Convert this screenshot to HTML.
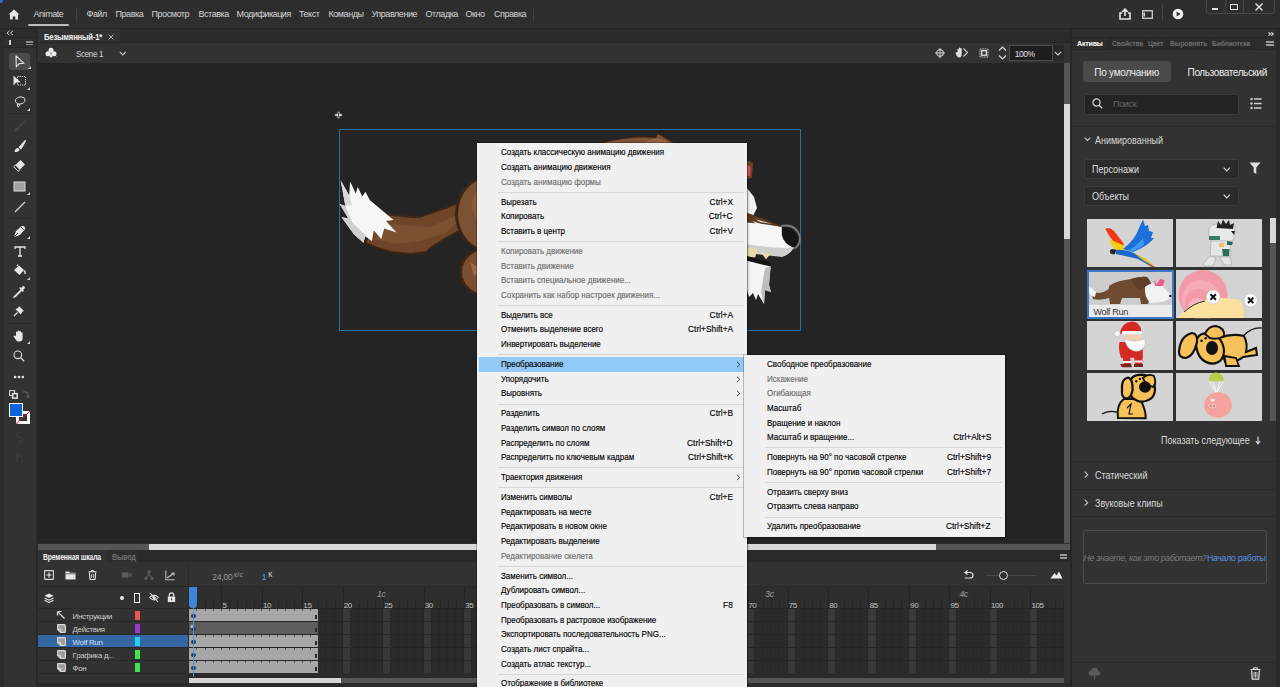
<!DOCTYPE html>
<html><head><meta charset="utf-8"><title>Animate</title>
<style>
*{margin:0;padding:0;box-sizing:border-box}
html,body{width:1280px;height:687px;overflow:hidden;background:#2e2e2e;font-family:"Liberation Sans",sans-serif;position:relative}
.a{position:absolute}
.t{position:absolute;white-space:nowrap;line-height:1}
svg{position:absolute;overflow:visible}

</style></head>
<body>
<div class="a" style="left:0px;top:0px;width:1280px;height:28px;background:#2e2e2e;"></div><div class="a" style="left:0px;top:28px;width:1280px;height:1px;background:#262626;"></div><div class="a" style="left:-3px;top:-3px;width:6px;height:6px;border-radius:3px;background:#3a6fd8"></div><svg style="left:8px;top:9px;" width="12" height="11" viewBox="0 0 12 11"><path d="M6 0.5 L11.5 5.5 L10 5.5 L10 10.5 L7.3 10.5 L7.3 7.5 L4.7 7.5 L4.7 10.5 L2 10.5 L2 5.5 L0.5 5.5 Z" fill="#e6e6e6"/></svg><div class="t" style="left:33.5px;top:9.88px;font-size:9px;color:#d4d4d4;letter-spacing:-0.45px;">Animate</div><div class="a" style="left:28px;top:24px;width:41px;height:2px;background:#bdbdbd;border-radius:1px"></div><div class="a" style="left:76px;top:8px;width:1px;height:14px;background:#404040;"></div><div class="t" style="left:86.5px;top:9.88px;font-size:9px;color:#d6d6d6;letter-spacing:-0.45px;">Файл</div><div class="t" style="left:115.5px;top:9.88px;font-size:9px;color:#d6d6d6;letter-spacing:-0.45px;">Правка</div><div class="t" style="left:151.5px;top:9.88px;font-size:9px;color:#d6d6d6;letter-spacing:-0.45px;">Просмотр</div><div class="t" style="left:198.5px;top:9.88px;font-size:9px;color:#d6d6d6;letter-spacing:-0.45px;">Вставка</div><div class="t" style="left:236.5px;top:9.88px;font-size:9px;color:#d6d6d6;letter-spacing:-0.45px;">Модификация</div><div class="t" style="left:299px;top:9.88px;font-size:9px;color:#d6d6d6;letter-spacing:-0.45px;">Текст</div><div class="t" style="left:328.5px;top:9.88px;font-size:9px;color:#d6d6d6;letter-spacing:-0.45px;">Команды</div><div class="t" style="left:371.5px;top:9.88px;font-size:9px;color:#d6d6d6;letter-spacing:-0.45px;">Управление</div><div class="t" style="left:425.5px;top:9.88px;font-size:9px;color:#d6d6d6;letter-spacing:-0.45px;">Отладка</div><div class="t" style="left:465.5px;top:9.88px;font-size:9px;color:#d6d6d6;letter-spacing:-0.45px;">Окно</div><div class="t" style="left:494px;top:9.88px;font-size:9px;color:#d6d6d6;letter-spacing:-0.45px;">Справка</div><div class="a" style="left:533px;top:8px;width:1px;height:14px;background:#404040;"></div><svg style="left:1119px;top:8px;" width="12" height="12" viewBox="0 0 12 12"><path d="M3 5 L1 5 L1 11 L11 11 L11 5 L9 5" fill="none" stroke="#e8e8e8" stroke-width="1.6"/><path d="M6 8 L6 1.5 M3.2 4 L6 1.2 L8.8 4" fill="none" stroke="#e8e8e8" stroke-width="1.6"/></svg><svg style="left:1142px;top:10px;" width="11" height="9" viewBox="0 0 11 9"><rect x="0.7" y="0.7" width="9.6" height="7.6" fill="none" stroke="#d0d0d0" stroke-width="1.3"/><rect x="1.5" y="2.5" width="1.5" height="4" fill="#d0d0d0"/></svg><div class="a" style="left:1162px;top:5px;width:1px;height:16px;background:#454545;"></div><svg style="left:1172px;top:8px;" width="12" height="12" viewBox="0 0 12 12"><circle cx="6" cy="6" r="5.3" fill="#f0f0f0"/><path d="M4.6 3.4 L8.6 6 L4.6 8.6 Z" fill="#2e2e2e"/></svg><div class="a" style="left:1206px;top:-2px;width:69px;height:15.5px;border:1px solid #4a4a4a;border-radius:0 0 3px 3px"></div><div class="a" style="left:1225px;top:0px;width:1px;height:13px;background:#444;"></div><div class="a" style="left:1243px;top:0px;width:1px;height:13px;background:#444;"></div><div class="a" style="left:1212px;top:8px;width:6px;height:2px;background:#e0e0e0;"></div><div class="a" style="left:1230px;top:4px;width:8px;height:6px;border:1.5px solid #e0e0e0"></div><svg style="left:1255px;top:3px;" width="8" height="8" viewBox="0 0 8 8"><path d="M0.5 0.5 L7.5 7.5 M7.5 0.5 L0.5 7.5" stroke="#e8e8e8" stroke-width="1.4"/></svg><div class="a" style="left:0px;top:29px;width:4px;height:658px;background:#2b2b2b;"></div><div class="a" style="left:4px;top:29px;width:32px;height:658px;background:#323232;"></div><div class="a" style="left:36px;top:29px;width:2px;height:658px;background:#282828;"></div><div class="a" style="left:4px;top:29px;width:32px;height:8px;background:#2c2c2c;"></div><div class="a" style="left:4px;top:38px;width:32px;height:9px;background:#2e2e2e;"></div><div class="a" style="left:4px;top:37px;width:32px;height:1px;background:#262626;"></div><svg style="left:6px;top:30px;" width="8" height="6" viewBox="0 0 8 6"><path d="M3.5 0.8 L1 3 L3.5 5.2 M7 0.8 L4.5 3 L7 5.2" fill="none" stroke="#d0d0d0" stroke-width="1"/></svg><div class="a" style="left:9px;top:40px;width:1.5px;height:5px;background:#cfcfcf;"></div><div class="a" style="left:26px;top:41px;width:7px;height:1.8px;background:#8a8a8a;"></div><div class="a" style="left:26px;top:43.6px;width:7px;height:1.8px;background:#8a8a8a;"></div><div class="a" style="left:4px;top:47px;width:32px;height:1px;background:#272727;"></div><div class="a" style="left:9px;top:53px;width:21px;height:17px;background:#4b4b4b;border-radius:3px"></div><svg style="left:15px;top:55px;" width="10" height="13" viewBox="0 0 10 13"><path d="M1 0.8 L1.3 12 L4.2 8.6 L9 8.3 Z" fill="none" stroke="#e6e6e6" stroke-width="1.1" stroke-linejoin="round"/></svg><svg style="left:28px;top:66px;" width="3" height="3" viewBox="0 0 3 3"><path d="M3 0 L3 3 L0 3 Z" fill="#d0d0d0"/></svg><svg style="left:13px;top:75px;" width="14" height="12" viewBox="0 0 14 12"><rect x="4.5" y="1.5" width="8" height="8.5" fill="none" stroke="#e0e0e0" stroke-width="1" stroke-dasharray="1.2 0.9"/><path d="M0.5 0.5 L0.5 10.5 L3.2 7.6 L7.5 7.2 Z" fill="#e6e6e6"/></svg><svg style="left:27px;top:87px;" width="3" height="3" viewBox="0 0 3 3"><path d="M3 0 L3 3 L0 3 Z" fill="#d0d0d0"/></svg><svg style="left:14px;top:96px;" width="12" height="13" viewBox="0 0 12 13"><path d="M4 8 Q0.5 6.5 1.5 3.5 Q3 0.8 7 0.8 Q11 1 11 4 Q11 7.5 5.5 8 Q3.5 8 3.5 9.5 Q3.5 11 5 11" fill="none" stroke="#dcdcdc" stroke-width="1"/><circle cx="4.5" cy="9" r="1.3" fill="none" stroke="#dcdcdc" stroke-width="0.9"/></svg><svg style="left:27px;top:108px;" width="3" height="3" viewBox="0 0 3 3"><path d="M3 0 L3 3 L0 3 Z" fill="#d0d0d0"/></svg><div class="a" style="left:8px;top:113px;width:24px;height:1px;background:#2a2a2a;"></div><svg style="left:14px;top:120px;" width="12" height="12" viewBox="0 0 12 12"><path d="M11 1 L5 7 M1 11 Q1 8 4 8 L5 9 Q4 11 1 11 Z" fill="#454545" stroke="#454545" stroke-width="1.5"/></svg><svg style="left:14px;top:140px;" width="12" height="13" viewBox="0 0 12 13"><path d="M11.3 0.8 L5.5 7.2 L7 8.6 Z" fill="#e6e6e6" stroke="#e6e6e6" stroke-width="1.4" stroke-linejoin="round"/><path d="M0.5 12 Q1 8.2 4.3 8 L5.6 9.4 Q5 12 0.5 12 Z" fill="#e6e6e6"/></svg><svg style="left:13px;top:159px;" width="13" height="13" viewBox="0 0 13 13"><path d="M7.5 1 L12 5.5 L7 10.5 L2.5 6 Z" fill="#e6e6e6"/><path d="M2.5 6 L7 10.5 L5.2 12.3 L0.7 7.8 Z" fill="none" stroke="#e6e6e6" stroke-width="1"/></svg><svg style="left:13px;top:181px;" width="13" height="11" viewBox="0 0 13 11"><rect x="1" y="1" width="11" height="9" fill="#a2a2a2" stroke="#dcdcdc" stroke-width="1"/></svg><svg style="left:27px;top:192px;" width="3" height="3" viewBox="0 0 3 3"><path d="M3 0 L3 3 L0 3 Z" fill="#d0d0d0"/></svg><svg style="left:14px;top:201px;" width="12" height="12" viewBox="0 0 12 12"><path d="M1 11 L11 1" stroke="#e0e0e0" stroke-width="1.1"/></svg><div class="a" style="left:8px;top:218px;width:24px;height:1px;background:#2a2a2a;"></div><svg style="left:13px;top:225px;" width="13" height="13" viewBox="0 0 13 13"><path d="M11.5 1.5 L9 0.8 L3 6 L1 12 L7 10 L12.2 4 Z" fill="#e6e6e6"/><path d="M1.2 11.8 L5 8" stroke="#323232" stroke-width="0.9"/><path d="M8 2 L11 5" stroke="#323232" stroke-width="0.8"/></svg><svg style="left:27px;top:236px;" width="3" height="3" viewBox="0 0 3 3"><path d="M3 0 L3 3 L0 3 Z" fill="#d0d0d0"/></svg><svg style="left:14px;top:246px;" width="12" height="11" viewBox="0 0 12 11"><path d="M1 3 L1 1 L11 1 L11 3 M6 1 L6 10 M4 10 L8 10" fill="none" stroke="#e6e6e6" stroke-width="1.3"/></svg><svg style="left:13px;top:264px;" width="14" height="13" viewBox="0 0 14 13"><path d="M1 6 L6 1.5 L11 6 L6.5 11 Z" fill="#e6e6e6"/><path d="M4 2 L5 0.5" stroke="#e6e6e6" stroke-width="1.2"/><path d="M11.2 6.5 Q12.5 8 12 10" stroke="#e6e6e6" stroke-width="1.5" fill="none"/></svg><svg style="left:27px;top:277px;" width="3" height="3" viewBox="0 0 3 3"><path d="M3 0 L3 3 L0 3 Z" fill="#d0d0d0"/></svg><svg style="left:13px;top:285px;" width="13" height="13" viewBox="0 0 13 13"><path d="M10 1 Q12 1 12 3 L9.5 5.5 L7.5 3.5 Z" fill="#e6e6e6"/><path d="M8.5 4.5 L2 11 L1 12 L2 12 L8.8 5.2" fill="none" stroke="#e6e6e6" stroke-width="1.2"/><path d="M6.5 2.5 L10.5 6.5" stroke="#e6e6e6" stroke-width="1.2"/></svg><svg style="left:13px;top:305px;" width="12" height="12" viewBox="0 0 12 12"><path d="M6 1 L11 6 L9.5 6.5 L7.8 9.5 L2.5 4.2 L5.5 2.5 Z" fill="#e6e6e6"/><path d="M4.5 7.5 L1 11" stroke="#e6e6e6" stroke-width="1.2"/></svg><div class="a" style="left:8px;top:323px;width:24px;height:1px;background:#2a2a2a;"></div><svg style="left:13px;top:330px;" width="13" height="13" viewBox="0 0 13 13"><path d="M3 6 L3 2.5 Q3 1.6 3.8 1.6 Q4.6 1.6 4.6 2.5 L4.6 5.5 L4.6 1.5 Q4.6 0.6 5.5 0.6 Q6.4 0.6 6.4 1.5 L6.4 5.5 L6.4 1.8 Q6.4 1 7.2 1 Q8 1 8 1.8 L8 5.8 L8 3 Q8 2.2 8.8 2.2 Q9.6 2.2 9.6 3 L9.6 8 Q9.6 11.5 6.5 11.5 L5.5 11.5 Q4 11.5 3 10 L0.8 6.8 Q0.4 6 1.2 5.6 Q2 5.3 3 6.3 Z" fill="#e6e6e6"/></svg><svg style="left:27px;top:341px;" width="3" height="3" viewBox="0 0 3 3"><path d="M3 0 L3 3 L0 3 Z" fill="#d0d0d0"/></svg><svg style="left:13px;top:350px;" width="12" height="12" viewBox="0 0 12 12"><circle cx="4.8" cy="4.8" r="3.8" fill="none" stroke="#e0e0e0" stroke-width="1.1"/><path d="M7.6 7.6 L11.2 11.2" stroke="#e0e0e0" stroke-width="1.3"/></svg><svg style="left:13px;top:375px;" width="12" height="4" viewBox="0 0 12 4"><circle cx="2.2" cy="2" r="1.3" fill="#e6e6e6"/><circle cx="6" cy="2" r="1.3" fill="#e6e6e6"/><circle cx="9.8" cy="2" r="1.3" fill="#e6e6e6"/></svg><svg style="left:9px;top:390px;" width="9" height="9" viewBox="0 0 9 9"><rect x="0.6" y="0.6" width="5" height="5" fill="#323232" stroke="#e0e0e0" stroke-width="1"/><rect x="3.4" y="3.4" width="5" height="5" fill="#e0e0e0" stroke="#e0e0e0" stroke-width="1"/><rect x="4.4" y="4.4" width="3" height="3" fill="#323232"/></svg><svg style="left:22px;top:391px;" width="7" height="8" viewBox="0 0 7 8"><path d="M1 1 L4 1 Q6 1 6 3 L6 7 M4.5 5.5 L6 7 L7.5 5.5" fill="none" stroke="#666" stroke-width="1"/></svg><svg style="left:15px;top:410px;" width="16" height="15" viewBox="0 0 16 15"><rect x="1" y="1" width="14" height="13" fill="#fff"/><rect x="4" y="4" width="8" height="7" fill="#323232"/><path d="M1 14 L15 1" stroke="#e02020" stroke-width="1"/></svg><div class="a" style="left:9px;top:403px;width:14px;height:13.5px;background:#0e63d6;border:1px solid #fff"></div><svg style="left:15px;top:431px;" width="9" height="12" viewBox="0 0 9 12"><path d="M7 1 Q2 1 2 4 Q2 6 5 6.5 Q8 7 7.5 9.5 Q7 11 3 11" fill="none" stroke="#3e3e3e" stroke-width="1.2"/></svg><svg style="left:15px;top:451px;" width="9" height="12" viewBox="0 0 9 12"><path d="M2 1 L2 11 M2 6 Q4 4 6 5 Q7 6 7 11" fill="none" stroke="#3e3e3e" stroke-width="1.2"/></svg><div class="a" style="left:38px;top:29px;width:1032px;height:13px;background:#2b2b2b;"></div><div class="a" style="left:38px;top:29px;width:82px;height:13px;background:#323232;"></div><div class="a" style="left:120px;top:29px;width:1px;height:13px;background:#292929;"></div><div class="t" style="left:43.7px;top:32.80px;font-size:8.5px;color:#f0f0f0;letter-spacing:-0.2px;font-weight:bold;transform:scaleX(0.9);transform-origin:left center;">Безымянный-1*</div><svg style="left:108px;top:34px;" width="6" height="6" viewBox="0 0 6 6"><path d="M0.6 0.6 L5.4 5.4 M5.4 0.6 L0.6 5.4" stroke="#bdbdbd" stroke-width="0.9"/></svg><div class="a" style="left:38px;top:42px;width:1032px;height:1px;background:#262626;"></div><div class="a" style="left:38px;top:43px;width:1032px;height:20px;background:#323232;"></div><svg style="left:45px;top:47px;" width="12" height="12" viewBox="0 0 12 12"><circle cx="6" cy="3.2" r="2.5" fill="#ececec"/><circle cx="3" cy="6.8" r="2.5" fill="#ececec"/><circle cx="9" cy="6.8" r="2.5" fill="#ececec"/><path d="M6 5 L4.5 10.3 L7.5 10.3 Z" fill="#ececec"/><path d="M10.5 10 L11.5 10 L11.5 9 Z" fill="#aaa"/></svg><div class="t" style="left:75.5px;top:49.88px;font-size:9px;color:#d8d8d8;letter-spacing:-0.3px;transform:scaleX(0.88);transform-origin:left center;">Scene 1</div><svg style="left:119px;top:51px;" width="8" height="5" viewBox="0 0 8 5"><path d="M0.8 0.8 L3.8 3.8 L6.8 0.8" fill="none" stroke="#d0d0d0" stroke-width="1.2"/></svg><svg style="left:935px;top:48px;" width="10" height="10" viewBox="0 0 10 10"><circle cx="5" cy="5" r="3.2" fill="none" stroke="#d6d6d6" stroke-width="1.1"/><path d="M5 0 L5 10 M0 5 L10 5" stroke="#d6d6d6" stroke-width="1"/></svg><svg style="left:955px;top:47px;" width="14" height="12" viewBox="0 0 14 12"><path d="M2.5 5 L2.5 2.5 Q2.5 1.8 3.2 1.8 Q3.9 1.8 3.9 2.5 L3.9 4.5 L3.9 1.3 Q3.9 0.6 4.6 0.6 Q5.3 0.6 5.3 1.3 L5.3 4.5 L5.3 1.8 Q5.3 1.1 6 1.1 Q6.7 1.1 6.7 1.8 L6.7 6.5 Q6.7 10.5 4.5 10.5 Q2.5 10.5 1.5 8.5 L0.5 6 Q0.5 5 1.5 5.2 Z" fill="#e0e0e0"/><path d="M8.5 1.5 L12.5 5.5 L8.5 9.5" fill="none" stroke="#cfcfcf" stroke-width="1.1"/></svg><svg style="left:979px;top:48px;" width="10" height="10" viewBox="0 0 10 10"><rect x="1" y="1" width="8" height="8" fill="none" stroke="#cfcfcf" stroke-width="1" stroke-dasharray="1 0.6"/><rect x="2.7" y="2.7" width="4.6" height="4.6" fill="none" stroke="#dcdcdc" stroke-width="1.3"/></svg><svg style="left:998px;top:46px;" width="9" height="14" viewBox="0 0 9 14"><path d="M1 4.5 L4.5 1 L8 4.5 M1 9.5 L4.5 13 L8 9.5" fill="none" stroke="#d8d8d8" stroke-width="1.2"/></svg><div class="a" style="left:1052px;top:45px;width:12px;height:16px;background:#282828;border-radius:0 2px 2px 0"></div><div class="a" style="left:1008.5px;top:45px;width:44px;height:16px;background:#1e1e1e;border:1px solid #4e4e4e"></div><div class="t" style="left:1014.8px;top:50.30px;font-size:8.5px;color:#e0e0e0;letter-spacing:-0.5px;">100%</div><svg style="left:1054px;top:51px;" width="8" height="5" viewBox="0 0 8 5"><path d="M0.8 0.8 L4 4 L7.2 0.8" fill="none" stroke="#d0d0d0" stroke-width="1.2"/></svg><div class="a" style="left:38px;top:63px;width:1026px;height:480px;background:#242424;"></div><div class="a" style="left:1064px;top:63px;width:6px;height:480px;background:#555555;"></div><div class="a" style="left:1064px;top:104px;width:6px;height:135px;background:#d8d8d8;"></div><div class="a" style="left:38px;top:543.5px;width:1032px;height:6.5px;background:#555555;"></div><div class="a" style="left:149px;top:543.5px;width:787px;height:6.5px;background:#d8d8d8;"></div><svg style="left:334px;top:111px;" width="9" height="8" viewBox="0 0 9 8"><path d="M3.2 0.5 L5.8 0.5 L5.8 2.8 L8.3 2.8 L8.3 5.2 L5.8 5.2 L5.8 7.5 L3.2 7.5 L3.2 5.2 L0.7 5.2 L0.7 2.8 L3.2 2.8 Z" fill="#f0f0f0" stroke="#111" stroke-width="0.6"/><path d="M4.5 1.5 L4.5 6.5" stroke="#111" stroke-width="0.8"/></svg><div class="a" style="left:338.5px;top:128.5px;width:462px;height:202.5px;border:1.5px solid #2a6f9e"></div><svg style="left:0;top:0" width="1280" height="687" viewBox="0 0 1280 687">
<path d="M386 213.5 L414.5 216.3 L421 215.4 L429.6 212.6 L448.5 206 L460 201 L470 200 L466 236 L458 232.4 L441 242 L429.6 249.5 L427.7 253.2 L410.7 255.1 L391.8 253.2 L376.6 248.5 L365.3 243.8 Z" fill="#3d2616"/>
<path d="M387 215.5 L414.5 218.3 L421 217.4 L429.6 214.6 L448.5 208 L460 203 L466 233 L458 230.4 L441 240 L429.6 247.5 L426 251 L410.7 253 L391.8 251.2 L376.6 246.5 L366 242 Z" fill="#6e4529"/>
<path d="M392 224 L430 227 L455 216 L462 219 L445 233 L420 241 L395 244 L374 239 Z" fill="#7b5132"/>
<path d="M340.7 180.4 L349.2 195.5 L350.1 181.4 L355.8 193.6 L357.7 187 L362.4 196.5 L365.3 191.8 L370 200.3 L381.3 209.7 L393.6 220 L386 221 L396.5 232.4 L384.2 228.6 L381.3 239 L373.8 230.5 L371.9 241 L365.3 236.2 L363.4 242.8 L353.9 234.3 L341.6 217.3 L348.2 218.2 L339.7 204 L345.4 206 Z" fill="#f6f6f6"/>
<path d="M339.7 204 L345.4 206 L352 222 L362 232 L371.9 241 L365.3 236.2 L363.4 242.8 L353.9 234.3 L341.6 217.3 L348.2 218.2 Z" fill="#cfcfcf"/>
<path d="M340.7 180.4 L349.2 195.5 L352 205 L345.4 206 L339.7 204 L345.4 206 Z" fill="#d8d8d8"/>
<ellipse cx="488" cy="214" rx="33" ry="38" fill="#3d2616"/>
<ellipse cx="489" cy="214" rx="31" ry="36" fill="#7d5233"/>
<ellipse cx="494" cy="205" rx="22" ry="22" fill="#8c5d3a"/>
<ellipse cx="490" cy="272" rx="31" ry="26" fill="#3d2616"/>
<ellipse cx="491" cy="272" rx="29" ry="24" fill="#7a4f31"/>
<path d="M470 262 L482 270 L474 276 Z" fill="#9a6a45"/>
<path d="M601 143 Q628 134 656 136.5 L657 132 L676 143 Z" fill="#3a2414"/><path d="M603 143 Q630 135.5 656 138 L658 134 L673 143 Z" fill="#7c5134"/>
<path d="M645 143 Q652 138 659 138 L670 143 Z" fill="#946240"/>
<path d="M747 160 L753 163 L752 178 L747 179 Z" fill="#6e4428"/>
<path d="M747 165 L750.5 167 L750 176 L747 176 Z" fill="#e0506e"/>
<path d="M747 188 L754 197 L757 208 L753 216 L747 216 Z" fill="#f2f2f2"/>
<path d="M747 212.8 L765 219 L783.4 227.2 L770 226 L747 223 Z" fill="#5a3820"/>
<path d="M755 219 L772 224 L760 222 Z M752 221 L765 225 L756 224 Z" fill="#e8e8e8"/>
<path d="M747 222.4 L770 225 L782.6 227.2 Q790 236 794 247 Q790 255 782 256 L747 251 Z" fill="#f6f6f6"/>
<path d="M747 244 Q770 248 786 248 L793 247 Q790 255 782 257 L747 253 Z" fill="#cfcfcf"/>
<path d="M781.8 227 Q793 226 798 237 Q798 246 793 247.5 Q784 244 781.8 235 Z" fill="#151515"/>
<path d="M781 226 Q796 223 800 237 Q800 247 793 249" fill="none" stroke="#7a7a7a" stroke-width="1.8"/>
<path d="M747 248 L757.8 249 L755 257.6 L747 257 Z" fill="#eadca8"/>
<path d="M761 252.8 L770.6 254 L766 259.2 Z" fill="#eadca8"/>
<path d="M747 256 L770.6 262 L770.6 267.2 L747 261 Z" fill="#141414"/>
<path d="M747 260.8 L770.6 266.5 L769 285 L771 292 L765 290 L764 304 L758 294 L756 300 L753 293 L749 297 L747 290 Z" fill="#f4f4f4"/>
<path d="M765 268 L770.6 266.5 L769 285 L771 292 L765 290 L764 304 L761 292 Z" fill="#bdbdbd"/>
</svg><div class="a" style="left:38px;top:550px;width:1032px;height:137px;background:#323232;"></div><div class="a" style="left:38px;top:550px;width:1032px;height:12px;background:#2a2a2a;"></div><div class="a" style="left:38px;top:550px;width:69px;height:12px;background:#323232;"></div><div class="a" style="left:107px;top:550px;width:32px;height:12px;background:#2d2d2d;"></div><div class="a" style="left:139px;top:550px;width:1px;height:12px;background:#262626;"></div><div class="t" style="left:42.7px;top:552.80px;font-size:8.5px;color:#f2f2f2;letter-spacing:-0.2px;font-weight:bold;transform:scaleX(0.8);transform-origin:left center;">Временная шкала</div><div class="t" style="left:112px;top:552.80px;font-size:8.5px;color:#6e6e6e;letter-spacing:-0.2px;font-weight:bold;transform:scaleX(0.85);transform-origin:left center;">Вывод</div><div class="a" style="left:1059.5px;top:554px;width:7px;height:2px;background:#9a9a9a;"></div><div class="a" style="left:1059.5px;top:557px;width:7px;height:2px;background:#9a9a9a;"></div><svg style="left:44px;top:570px;" width="10" height="10" viewBox="0 0 10 10"><rect x="0.6" y="0.6" width="8.8" height="8.8" fill="none" stroke="#d8d8d8" stroke-width="1.1" rx="0.5"/><path d="M5 2.5 L5 7.5 M2.5 5 L7.5 5" stroke="#e8e8e8" stroke-width="1.2"/></svg><svg style="left:65px;top:571px;" width="11" height="9" viewBox="0 0 11 9"><path d="M0.5 0.5 L4 0.5 L5 1.8 L10.5 1.8 L10.5 8.5 L0.5 8.5 Z" fill="#e6e6e6"/><path d="M0.5 2.8 L10.5 2.8" stroke="#323232" stroke-width="0.7"/></svg><svg style="left:88px;top:570px;" width="9" height="10" viewBox="0 0 9 10"><path d="M0.5 1.8 L8.5 1.8 M3 1.8 L3.5 0.5 L5.5 0.5 L6 1.8" fill="none" stroke="#e6e6e6" stroke-width="1"/><path d="M1.3 2.5 L2 9.5 L7 9.5 L7.7 2.5" fill="none" stroke="#e6e6e6" stroke-width="1.1"/><path d="M3.5 4 L3.5 8 M5.5 4 L5.5 8" stroke="#e6e6e6" stroke-width="0.8"/></svg><svg style="left:122px;top:572px;" width="10" height="6" viewBox="0 0 10 6"><rect x="0" y="0.5" width="6.5" height="5" fill="#5e5e5e"/><path d="M6.5 3 L9.5 0.8 L9.5 5.2 Z" fill="#5e5e5e"/></svg><svg style="left:144px;top:570px;" width="10" height="11" viewBox="0 0 10 11"><path d="M5 1 L5 4 M2 8 L5 4 L8 8" fill="none" stroke="#5e5e5e" stroke-width="1.2"/><circle cx="5" cy="1.8" r="1.6" fill="#5e5e5e"/><circle cx="2" cy="8.3" r="1.6" fill="#5e5e5e"/><circle cx="8" cy="8.3" r="1.6" fill="#5e5e5e"/></svg><svg style="left:165px;top:570px;" width="10" height="11" viewBox="0 0 10 11"><path d="M0.8 0.5 L0.8 9.8 L9.5 9.8" fill="none" stroke="#b8b8b8" stroke-width="1.1"/><path d="M2 8 L8.5 3.5 M6.5 3 L9 3 L9 5.5" fill="none" stroke="#c8c8c8" stroke-width="1.1"/></svg><div class="a" style="left:188px;top:563px;width:1px;height:124px;background:#2a2a2a;"></div><div class="t" style="left:212.3px;top:572.80px;font-size:8.5px;color:#9a9a9a;letter-spacing:-0.2px;">24,00</div><div class="t" style="left:234px;top:570.57px;font-size:7px;color:#9a9a9a;letter-spacing:0.3px;">к/с</div><div class="t" style="left:261.8px;top:573.30px;font-size:8.5px;color:#5aa2ea;">1</div><div class="t" style="left:268.3px;top:571.07px;font-size:7px;color:#e0e0e0;">К</div><svg style="left:964px;top:570px;" width="10" height="9" viewBox="0 0 10 9"><path d="M2 2.5 L6 2.5 Q9 2.5 9 5.5 Q9 8 6 8 L0.8 8" fill="none" stroke="#e0e0e0" stroke-width="1.2"/><path d="M3.5 0.5 L1 2.5 L3.5 4.5" fill="none" stroke="#e0e0e0" stroke-width="1.2"/></svg><div class="a" style="left:986px;top:575px;width:50px;height:1px;background:#484848;"></div><div class="a" style="left:998.5px;top:570.5px;width:9px;height:9px;border:1.5px solid #e0e0e0;border-radius:5px;background:#323232"></div><svg style="left:1050px;top:570px;" width="13" height="9" viewBox="0 0 13 9"><path d="M0.5 8.5 L4.5 3 L6.5 5.5 L9 1.5 L12.5 8.5 Z" fill="#ececec"/></svg><div class="a" style="left:189px;top:586px;width:881px;height:1px;background:#282828;"></div><div class="a" style="left:189px;top:587px;width:875px;height:22px;background:#2e2e2e;"></div><div class="a" style="left:189px;top:597px;width:875px;height:1px;background:#2e2e2e;"></div><div class="a" style="left:38px;top:586px;width:150px;height:1px;background:#282828;"></div><div class="a" style="left:188.90px;top:598px;width:1px;height:11px;background:#262626"></div><div class="a" style="left:196.99px;top:598px;width:1px;height:11px;background:#262626"></div><div class="a" style="left:205.08px;top:598px;width:1px;height:11px;background:#262626"></div><div class="a" style="left:213.17px;top:598px;width:1px;height:11px;background:#262626"></div><div class="a" style="left:221.26px;top:587px;width:1px;height:22px;background:#242424"></div><div class="a" style="left:229.35px;top:598px;width:1px;height:11px;background:#262626"></div><div class="a" style="left:237.44px;top:598px;width:1px;height:11px;background:#262626"></div><div class="a" style="left:245.53px;top:598px;width:1px;height:11px;background:#262626"></div><div class="a" style="left:253.62px;top:598px;width:1px;height:11px;background:#262626"></div><div class="a" style="left:261.71px;top:587px;width:1px;height:22px;background:#242424"></div><div class="a" style="left:269.80px;top:598px;width:1px;height:11px;background:#262626"></div><div class="a" style="left:277.89px;top:598px;width:1px;height:11px;background:#262626"></div><div class="a" style="left:285.98px;top:598px;width:1px;height:11px;background:#262626"></div><div class="a" style="left:294.07px;top:598px;width:1px;height:11px;background:#262626"></div><div class="a" style="left:302.16px;top:587px;width:1px;height:22px;background:#242424"></div><div class="a" style="left:310.25px;top:598px;width:1px;height:11px;background:#262626"></div><div class="a" style="left:318.34px;top:598px;width:1px;height:11px;background:#262626"></div><div class="a" style="left:326.43px;top:598px;width:1px;height:11px;background:#262626"></div><div class="a" style="left:334.52px;top:598px;width:1px;height:11px;background:#262626"></div><div class="a" style="left:342.61px;top:587px;width:1px;height:22px;background:#242424"></div><div class="a" style="left:350.70px;top:598px;width:1px;height:11px;background:#262626"></div><div class="a" style="left:358.79px;top:598px;width:1px;height:11px;background:#262626"></div><div class="a" style="left:366.88px;top:598px;width:1px;height:11px;background:#262626"></div><div class="a" style="left:374.97px;top:598px;width:1px;height:11px;background:#262626"></div><div class="a" style="left:383.06px;top:587px;width:1px;height:22px;background:#242424"></div><div class="a" style="left:391.15px;top:598px;width:1px;height:11px;background:#262626"></div><div class="a" style="left:399.24px;top:598px;width:1px;height:11px;background:#262626"></div><div class="a" style="left:407.33px;top:598px;width:1px;height:11px;background:#262626"></div><div class="a" style="left:415.42px;top:598px;width:1px;height:11px;background:#262626"></div><div class="a" style="left:423.51px;top:587px;width:1px;height:22px;background:#242424"></div><div class="a" style="left:431.60px;top:598px;width:1px;height:11px;background:#262626"></div><div class="a" style="left:439.69px;top:598px;width:1px;height:11px;background:#262626"></div><div class="a" style="left:447.78px;top:598px;width:1px;height:11px;background:#262626"></div><div class="a" style="left:455.87px;top:598px;width:1px;height:11px;background:#262626"></div><div class="a" style="left:463.96px;top:587px;width:1px;height:22px;background:#242424"></div><div class="a" style="left:472.05px;top:598px;width:1px;height:11px;background:#262626"></div><div class="a" style="left:480.14px;top:598px;width:1px;height:11px;background:#262626"></div><div class="a" style="left:488.23px;top:598px;width:1px;height:11px;background:#262626"></div><div class="a" style="left:496.32px;top:598px;width:1px;height:11px;background:#262626"></div><div class="a" style="left:504.41px;top:587px;width:1px;height:22px;background:#242424"></div><div class="a" style="left:512.50px;top:598px;width:1px;height:11px;background:#262626"></div><div class="a" style="left:520.59px;top:598px;width:1px;height:11px;background:#262626"></div><div class="a" style="left:528.68px;top:598px;width:1px;height:11px;background:#262626"></div><div class="a" style="left:536.77px;top:598px;width:1px;height:11px;background:#262626"></div><div class="a" style="left:544.86px;top:587px;width:1px;height:22px;background:#242424"></div><div class="a" style="left:552.95px;top:598px;width:1px;height:11px;background:#262626"></div><div class="a" style="left:561.04px;top:598px;width:1px;height:11px;background:#262626"></div><div class="a" style="left:569.13px;top:598px;width:1px;height:11px;background:#262626"></div><div class="a" style="left:577.22px;top:598px;width:1px;height:11px;background:#262626"></div><div class="a" style="left:585.31px;top:587px;width:1px;height:22px;background:#242424"></div><div class="a" style="left:593.40px;top:598px;width:1px;height:11px;background:#262626"></div><div class="a" style="left:601.49px;top:598px;width:1px;height:11px;background:#262626"></div><div class="a" style="left:609.58px;top:598px;width:1px;height:11px;background:#262626"></div><div class="a" style="left:617.67px;top:598px;width:1px;height:11px;background:#262626"></div><div class="a" style="left:625.76px;top:587px;width:1px;height:22px;background:#242424"></div><div class="a" style="left:633.85px;top:598px;width:1px;height:11px;background:#262626"></div><div class="a" style="left:641.94px;top:598px;width:1px;height:11px;background:#262626"></div><div class="a" style="left:650.03px;top:598px;width:1px;height:11px;background:#262626"></div><div class="a" style="left:658.12px;top:598px;width:1px;height:11px;background:#262626"></div><div class="a" style="left:666.21px;top:587px;width:1px;height:22px;background:#242424"></div><div class="a" style="left:674.30px;top:598px;width:1px;height:11px;background:#262626"></div><div class="a" style="left:682.39px;top:598px;width:1px;height:11px;background:#262626"></div><div class="a" style="left:690.48px;top:598px;width:1px;height:11px;background:#262626"></div><div class="a" style="left:698.57px;top:598px;width:1px;height:11px;background:#262626"></div><div class="a" style="left:706.66px;top:587px;width:1px;height:22px;background:#242424"></div><div class="a" style="left:714.75px;top:598px;width:1px;height:11px;background:#262626"></div><div class="a" style="left:722.84px;top:598px;width:1px;height:11px;background:#262626"></div><div class="a" style="left:730.93px;top:598px;width:1px;height:11px;background:#262626"></div><div class="a" style="left:739.02px;top:598px;width:1px;height:11px;background:#262626"></div><div class="a" style="left:747.11px;top:587px;width:1px;height:22px;background:#242424"></div><div class="a" style="left:755.20px;top:598px;width:1px;height:11px;background:#262626"></div><div class="a" style="left:763.29px;top:598px;width:1px;height:11px;background:#262626"></div><div class="a" style="left:771.38px;top:598px;width:1px;height:11px;background:#262626"></div><div class="a" style="left:779.47px;top:598px;width:1px;height:11px;background:#262626"></div><div class="a" style="left:787.56px;top:587px;width:1px;height:22px;background:#242424"></div><div class="a" style="left:795.65px;top:598px;width:1px;height:11px;background:#262626"></div><div class="a" style="left:803.74px;top:598px;width:1px;height:11px;background:#262626"></div><div class="a" style="left:811.83px;top:598px;width:1px;height:11px;background:#262626"></div><div class="a" style="left:819.92px;top:598px;width:1px;height:11px;background:#262626"></div><div class="a" style="left:828.01px;top:587px;width:1px;height:22px;background:#242424"></div><div class="a" style="left:836.10px;top:598px;width:1px;height:11px;background:#262626"></div><div class="a" style="left:844.19px;top:598px;width:1px;height:11px;background:#262626"></div><div class="a" style="left:852.28px;top:598px;width:1px;height:11px;background:#262626"></div><div class="a" style="left:860.37px;top:598px;width:1px;height:11px;background:#262626"></div><div class="a" style="left:868.46px;top:587px;width:1px;height:22px;background:#242424"></div><div class="a" style="left:876.55px;top:598px;width:1px;height:11px;background:#262626"></div><div class="a" style="left:884.64px;top:598px;width:1px;height:11px;background:#262626"></div><div class="a" style="left:892.73px;top:598px;width:1px;height:11px;background:#262626"></div><div class="a" style="left:900.82px;top:598px;width:1px;height:11px;background:#262626"></div><div class="a" style="left:908.91px;top:587px;width:1px;height:22px;background:#242424"></div><div class="a" style="left:917.00px;top:598px;width:1px;height:11px;background:#262626"></div><div class="a" style="left:925.09px;top:598px;width:1px;height:11px;background:#262626"></div><div class="a" style="left:933.18px;top:598px;width:1px;height:11px;background:#262626"></div><div class="a" style="left:941.27px;top:598px;width:1px;height:11px;background:#262626"></div><div class="a" style="left:949.36px;top:587px;width:1px;height:22px;background:#242424"></div><div class="a" style="left:957.45px;top:598px;width:1px;height:11px;background:#262626"></div><div class="a" style="left:965.54px;top:598px;width:1px;height:11px;background:#262626"></div><div class="a" style="left:973.63px;top:598px;width:1px;height:11px;background:#262626"></div><div class="a" style="left:981.72px;top:598px;width:1px;height:11px;background:#262626"></div><div class="a" style="left:989.81px;top:587px;width:1px;height:22px;background:#242424"></div><div class="a" style="left:997.90px;top:598px;width:1px;height:11px;background:#262626"></div><div class="a" style="left:1005.99px;top:598px;width:1px;height:11px;background:#262626"></div><div class="a" style="left:1014.08px;top:598px;width:1px;height:11px;background:#262626"></div><div class="a" style="left:1022.17px;top:598px;width:1px;height:11px;background:#262626"></div><div class="a" style="left:1030.26px;top:587px;width:1px;height:22px;background:#242424"></div><div class="a" style="left:1038.35px;top:598px;width:1px;height:11px;background:#262626"></div><div class="a" style="left:1046.44px;top:598px;width:1px;height:11px;background:#262626"></div><div class="a" style="left:1054.53px;top:598px;width:1px;height:11px;background:#262626"></div><div class="a" style="left:1062.62px;top:598px;width:1px;height:11px;background:#262626"></div><div class="t" style="left:222.45999999999998px;top:601.53px;font-size:8px;color:#c4c4c4;letter-spacing:-0.4px;">5</div><div class="t" style="left:262.91px;top:601.53px;font-size:8px;color:#c4c4c4;letter-spacing:-0.4px;">10</div><div class="t" style="left:303.35999999999996px;top:601.53px;font-size:8px;color:#c4c4c4;letter-spacing:-0.4px;">15</div><div class="t" style="left:343.81px;top:601.53px;font-size:8px;color:#c4c4c4;letter-spacing:-0.4px;">20</div><div class="t" style="left:384.26px;top:601.53px;font-size:8px;color:#c4c4c4;letter-spacing:-0.4px;">25</div><div class="t" style="left:424.71px;top:601.53px;font-size:8px;color:#c4c4c4;letter-spacing:-0.4px;">30</div><div class="t" style="left:465.16px;top:601.53px;font-size:8px;color:#c4c4c4;letter-spacing:-0.4px;">35</div><div class="t" style="left:505.60999999999996px;top:601.53px;font-size:8px;color:#c4c4c4;letter-spacing:-0.4px;">40</div><div class="t" style="left:546.0600000000001px;top:601.53px;font-size:8px;color:#c4c4c4;letter-spacing:-0.4px;">45</div><div class="t" style="left:586.51px;top:601.53px;font-size:8px;color:#c4c4c4;letter-spacing:-0.4px;">50</div><div class="t" style="left:626.96px;top:601.53px;font-size:8px;color:#c4c4c4;letter-spacing:-0.4px;">55</div><div class="t" style="left:667.4100000000001px;top:601.53px;font-size:8px;color:#c4c4c4;letter-spacing:-0.4px;">60</div><div class="t" style="left:707.86px;top:601.53px;font-size:8px;color:#c4c4c4;letter-spacing:-0.4px;">65</div><div class="t" style="left:748.3100000000001px;top:601.53px;font-size:8px;color:#c4c4c4;letter-spacing:-0.4px;">70</div><div class="t" style="left:788.76px;top:601.53px;font-size:8px;color:#c4c4c4;letter-spacing:-0.4px;">75</div><div class="t" style="left:829.21px;top:601.53px;font-size:8px;color:#c4c4c4;letter-spacing:-0.4px;">80</div><div class="t" style="left:869.66px;top:601.53px;font-size:8px;color:#c4c4c4;letter-spacing:-0.4px;">85</div><div class="t" style="left:910.11px;top:601.53px;font-size:8px;color:#c4c4c4;letter-spacing:-0.4px;">90</div><div class="t" style="left:950.5600000000001px;top:601.53px;font-size:8px;color:#c4c4c4;letter-spacing:-0.4px;">95</div><div class="t" style="left:991.01px;top:601.53px;font-size:8px;color:#c4c4c4;letter-spacing:-0.4px;">100</div><div class="t" style="left:1031.46px;top:601.53px;font-size:8px;color:#c4c4c4;letter-spacing:-0.4px;">105</div><div class="t" style="left:376.97px;top:589.60px;font-size:8.5px;color:#a0a0a0;letter-spacing:-0.3px;font-style:italic;">1с</div><div class="t" style="left:571.13px;top:589.60px;font-size:8.5px;color:#a0a0a0;letter-spacing:-0.3px;font-style:italic;">2с</div><div class="t" style="left:765.29px;top:589.60px;font-size:8.5px;color:#a0a0a0;letter-spacing:-0.3px;font-style:italic;">3с</div><div class="t" style="left:959.4499999999999px;top:589.60px;font-size:8.5px;color:#a0a0a0;letter-spacing:-0.3px;font-style:italic;">4с</div><div class="a" style="left:189px;top:608px;width:875px;height:1px;background:#262626;"></div><div class="a" style="left:189px;top:609px;width:875px;height:12px;background:#2b2b2b;"></div><div class="a" style="left:189px;top:621px;width:875px;height:1px;background:#262626;"></div><div class="a" style="left:189px;top:622px;width:875px;height:12px;background:#2b2b2b;"></div><div class="a" style="left:189px;top:634px;width:875px;height:1px;background:#262626;"></div><div class="a" style="left:189px;top:635px;width:875px;height:12px;background:#2b2b2b;"></div><div class="a" style="left:189px;top:647px;width:875px;height:1px;background:#262626;"></div><div class="a" style="left:189px;top:648px;width:875px;height:12px;background:#2b2b2b;"></div><div class="a" style="left:189px;top:660px;width:875px;height:1px;background:#262626;"></div><div class="a" style="left:189px;top:661px;width:875px;height:12px;background:#2b2b2b;"></div><div class="a" style="left:189px;top:673px;width:875px;height:1px;background:#262626;"></div><div class="a" style="left:195.99px;top:609px;width:1px;height:64px;background:#272727"></div><div class="a" style="left:204.08px;top:609px;width:1px;height:64px;background:#272727"></div><div class="a" style="left:212.17px;top:609px;width:1px;height:64px;background:#272727"></div><div class="a" style="left:220.26px;top:609px;width:1px;height:64px;background:#272727"></div><div class="a" style="left:221.26px;top:609px;width:8.09px;height:64px;background:#383838"></div><div class="a" style="left:228.35px;top:609px;width:1px;height:64px;background:#272727"></div><div class="a" style="left:236.44px;top:609px;width:1px;height:64px;background:#272727"></div><div class="a" style="left:244.53px;top:609px;width:1px;height:64px;background:#272727"></div><div class="a" style="left:252.62px;top:609px;width:1px;height:64px;background:#272727"></div><div class="a" style="left:260.71px;top:609px;width:1px;height:64px;background:#272727"></div><div class="a" style="left:261.71px;top:609px;width:8.09px;height:64px;background:#383838"></div><div class="a" style="left:268.80px;top:609px;width:1px;height:64px;background:#272727"></div><div class="a" style="left:276.89px;top:609px;width:1px;height:64px;background:#272727"></div><div class="a" style="left:284.98px;top:609px;width:1px;height:64px;background:#272727"></div><div class="a" style="left:293.07px;top:609px;width:1px;height:64px;background:#272727"></div><div class="a" style="left:301.16px;top:609px;width:1px;height:64px;background:#272727"></div><div class="a" style="left:302.16px;top:609px;width:8.09px;height:64px;background:#383838"></div><div class="a" style="left:309.25px;top:609px;width:1px;height:64px;background:#272727"></div><div class="a" style="left:317.34px;top:609px;width:1px;height:64px;background:#272727"></div><div class="a" style="left:325.43px;top:609px;width:1px;height:64px;background:#272727"></div><div class="a" style="left:333.52px;top:609px;width:1px;height:64px;background:#272727"></div><div class="a" style="left:341.61px;top:609px;width:1px;height:64px;background:#272727"></div><div class="a" style="left:342.61px;top:609px;width:8.09px;height:64px;background:#383838"></div><div class="a" style="left:349.70px;top:609px;width:1px;height:64px;background:#272727"></div><div class="a" style="left:357.79px;top:609px;width:1px;height:64px;background:#272727"></div><div class="a" style="left:365.88px;top:609px;width:1px;height:64px;background:#272727"></div><div class="a" style="left:373.97px;top:609px;width:1px;height:64px;background:#272727"></div><div class="a" style="left:382.06px;top:609px;width:1px;height:64px;background:#272727"></div><div class="a" style="left:383.06px;top:609px;width:8.09px;height:64px;background:#383838"></div><div class="a" style="left:390.15px;top:609px;width:1px;height:64px;background:#272727"></div><div class="a" style="left:398.24px;top:609px;width:1px;height:64px;background:#272727"></div><div class="a" style="left:406.33px;top:609px;width:1px;height:64px;background:#272727"></div><div class="a" style="left:414.42px;top:609px;width:1px;height:64px;background:#272727"></div><div class="a" style="left:422.51px;top:609px;width:1px;height:64px;background:#272727"></div><div class="a" style="left:423.51px;top:609px;width:8.09px;height:64px;background:#383838"></div><div class="a" style="left:430.60px;top:609px;width:1px;height:64px;background:#272727"></div><div class="a" style="left:438.69px;top:609px;width:1px;height:64px;background:#272727"></div><div class="a" style="left:446.78px;top:609px;width:1px;height:64px;background:#272727"></div><div class="a" style="left:454.87px;top:609px;width:1px;height:64px;background:#272727"></div><div class="a" style="left:462.96px;top:609px;width:1px;height:64px;background:#272727"></div><div class="a" style="left:463.96px;top:609px;width:8.09px;height:64px;background:#383838"></div><div class="a" style="left:471.05px;top:609px;width:1px;height:64px;background:#272727"></div><div class="a" style="left:479.14px;top:609px;width:1px;height:64px;background:#272727"></div><div class="a" style="left:487.23px;top:609px;width:1px;height:64px;background:#272727"></div><div class="a" style="left:495.32px;top:609px;width:1px;height:64px;background:#272727"></div><div class="a" style="left:503.41px;top:609px;width:1px;height:64px;background:#272727"></div><div class="a" style="left:504.41px;top:609px;width:8.09px;height:64px;background:#383838"></div><div class="a" style="left:511.50px;top:609px;width:1px;height:64px;background:#272727"></div><div class="a" style="left:519.59px;top:609px;width:1px;height:64px;background:#272727"></div><div class="a" style="left:527.68px;top:609px;width:1px;height:64px;background:#272727"></div><div class="a" style="left:535.77px;top:609px;width:1px;height:64px;background:#272727"></div><div class="a" style="left:543.86px;top:609px;width:1px;height:64px;background:#272727"></div><div class="a" style="left:544.86px;top:609px;width:8.09px;height:64px;background:#383838"></div><div class="a" style="left:551.95px;top:609px;width:1px;height:64px;background:#272727"></div><div class="a" style="left:560.04px;top:609px;width:1px;height:64px;background:#272727"></div><div class="a" style="left:568.13px;top:609px;width:1px;height:64px;background:#272727"></div><div class="a" style="left:576.22px;top:609px;width:1px;height:64px;background:#272727"></div><div class="a" style="left:584.31px;top:609px;width:1px;height:64px;background:#272727"></div><div class="a" style="left:585.31px;top:609px;width:8.09px;height:64px;background:#383838"></div><div class="a" style="left:592.40px;top:609px;width:1px;height:64px;background:#272727"></div><div class="a" style="left:600.49px;top:609px;width:1px;height:64px;background:#272727"></div><div class="a" style="left:608.58px;top:609px;width:1px;height:64px;background:#272727"></div><div class="a" style="left:616.67px;top:609px;width:1px;height:64px;background:#272727"></div><div class="a" style="left:624.76px;top:609px;width:1px;height:64px;background:#272727"></div><div class="a" style="left:625.76px;top:609px;width:8.09px;height:64px;background:#383838"></div><div class="a" style="left:632.85px;top:609px;width:1px;height:64px;background:#272727"></div><div class="a" style="left:640.94px;top:609px;width:1px;height:64px;background:#272727"></div><div class="a" style="left:649.03px;top:609px;width:1px;height:64px;background:#272727"></div><div class="a" style="left:657.12px;top:609px;width:1px;height:64px;background:#272727"></div><div class="a" style="left:665.21px;top:609px;width:1px;height:64px;background:#272727"></div><div class="a" style="left:666.21px;top:609px;width:8.09px;height:64px;background:#383838"></div><div class="a" style="left:673.30px;top:609px;width:1px;height:64px;background:#272727"></div><div class="a" style="left:681.39px;top:609px;width:1px;height:64px;background:#272727"></div><div class="a" style="left:689.48px;top:609px;width:1px;height:64px;background:#272727"></div><div class="a" style="left:697.57px;top:609px;width:1px;height:64px;background:#272727"></div><div class="a" style="left:705.66px;top:609px;width:1px;height:64px;background:#272727"></div><div class="a" style="left:706.66px;top:609px;width:8.09px;height:64px;background:#383838"></div><div class="a" style="left:713.75px;top:609px;width:1px;height:64px;background:#272727"></div><div class="a" style="left:721.84px;top:609px;width:1px;height:64px;background:#272727"></div><div class="a" style="left:729.93px;top:609px;width:1px;height:64px;background:#272727"></div><div class="a" style="left:738.02px;top:609px;width:1px;height:64px;background:#272727"></div><div class="a" style="left:746.11px;top:609px;width:1px;height:64px;background:#272727"></div><div class="a" style="left:747.11px;top:609px;width:8.09px;height:64px;background:#383838"></div><div class="a" style="left:754.20px;top:609px;width:1px;height:64px;background:#272727"></div><div class="a" style="left:762.29px;top:609px;width:1px;height:64px;background:#272727"></div><div class="a" style="left:770.38px;top:609px;width:1px;height:64px;background:#272727"></div><div class="a" style="left:778.47px;top:609px;width:1px;height:64px;background:#272727"></div><div class="a" style="left:786.56px;top:609px;width:1px;height:64px;background:#272727"></div><div class="a" style="left:787.56px;top:609px;width:8.09px;height:64px;background:#383838"></div><div class="a" style="left:794.65px;top:609px;width:1px;height:64px;background:#272727"></div><div class="a" style="left:802.74px;top:609px;width:1px;height:64px;background:#272727"></div><div class="a" style="left:810.83px;top:609px;width:1px;height:64px;background:#272727"></div><div class="a" style="left:818.92px;top:609px;width:1px;height:64px;background:#272727"></div><div class="a" style="left:827.01px;top:609px;width:1px;height:64px;background:#272727"></div><div class="a" style="left:828.01px;top:609px;width:8.09px;height:64px;background:#383838"></div><div class="a" style="left:835.10px;top:609px;width:1px;height:64px;background:#272727"></div><div class="a" style="left:843.19px;top:609px;width:1px;height:64px;background:#272727"></div><div class="a" style="left:851.28px;top:609px;width:1px;height:64px;background:#272727"></div><div class="a" style="left:859.37px;top:609px;width:1px;height:64px;background:#272727"></div><div class="a" style="left:867.46px;top:609px;width:1px;height:64px;background:#272727"></div><div class="a" style="left:868.46px;top:609px;width:8.09px;height:64px;background:#383838"></div><div class="a" style="left:875.55px;top:609px;width:1px;height:64px;background:#272727"></div><div class="a" style="left:883.64px;top:609px;width:1px;height:64px;background:#272727"></div><div class="a" style="left:891.73px;top:609px;width:1px;height:64px;background:#272727"></div><div class="a" style="left:899.82px;top:609px;width:1px;height:64px;background:#272727"></div><div class="a" style="left:907.91px;top:609px;width:1px;height:64px;background:#272727"></div><div class="a" style="left:908.91px;top:609px;width:8.09px;height:64px;background:#383838"></div><div class="a" style="left:916.00px;top:609px;width:1px;height:64px;background:#272727"></div><div class="a" style="left:924.09px;top:609px;width:1px;height:64px;background:#272727"></div><div class="a" style="left:932.18px;top:609px;width:1px;height:64px;background:#272727"></div><div class="a" style="left:940.27px;top:609px;width:1px;height:64px;background:#272727"></div><div class="a" style="left:948.36px;top:609px;width:1px;height:64px;background:#272727"></div><div class="a" style="left:949.36px;top:609px;width:8.09px;height:64px;background:#383838"></div><div class="a" style="left:956.45px;top:609px;width:1px;height:64px;background:#272727"></div><div class="a" style="left:964.54px;top:609px;width:1px;height:64px;background:#272727"></div><div class="a" style="left:972.63px;top:609px;width:1px;height:64px;background:#272727"></div><div class="a" style="left:980.72px;top:609px;width:1px;height:64px;background:#272727"></div><div class="a" style="left:988.81px;top:609px;width:1px;height:64px;background:#272727"></div><div class="a" style="left:989.81px;top:609px;width:8.09px;height:64px;background:#383838"></div><div class="a" style="left:996.90px;top:609px;width:1px;height:64px;background:#272727"></div><div class="a" style="left:1004.99px;top:609px;width:1px;height:64px;background:#272727"></div><div class="a" style="left:1013.08px;top:609px;width:1px;height:64px;background:#272727"></div><div class="a" style="left:1021.17px;top:609px;width:1px;height:64px;background:#272727"></div><div class="a" style="left:1029.26px;top:609px;width:1px;height:64px;background:#272727"></div><div class="a" style="left:1030.26px;top:609px;width:8.09px;height:64px;background:#383838"></div><div class="a" style="left:1037.35px;top:609px;width:1px;height:64px;background:#272727"></div><div class="a" style="left:1045.44px;top:609px;width:1px;height:64px;background:#272727"></div><div class="a" style="left:1053.53px;top:609px;width:1px;height:64px;background:#272727"></div><div class="a" style="left:1061.62px;top:609px;width:1px;height:64px;background:#272727"></div><div class="a" style="left:1069.71px;top:609px;width:1px;height:64px;background:#272727"></div><div class="a" style="left:189px;top:621px;width:875px;height:1px;background:#262626;"></div><div class="a" style="left:189px;top:634px;width:875px;height:1px;background:#262626;"></div><div class="a" style="left:189px;top:647px;width:875px;height:1px;background:#262626;"></div><div class="a" style="left:189px;top:660px;width:875px;height:1px;background:#262626;"></div><div class="a" style="left:189px;top:673px;width:875px;height:1px;background:#262626;"></div><div class="a" style="left:189px;top:673px;width:875px;height:5px;background:#2b2b2b;"></div><div class="a" style="left:189px;top:609px;width:129px;height:12px;background:#a7a7a7;"></div><div class="a" style="left:196.49px;top:609px;width:1px;height:1.5px;background:#555"></div><div class="a" style="left:204.58px;top:609px;width:1px;height:1.5px;background:#555"></div><div class="a" style="left:212.67px;top:609px;width:1px;height:1.5px;background:#555"></div><div class="a" style="left:220.76px;top:609px;width:1px;height:1.5px;background:#555"></div><div class="a" style="left:228.85px;top:609px;width:1px;height:1.5px;background:#555"></div><div class="a" style="left:236.94px;top:609px;width:1px;height:1.5px;background:#555"></div><div class="a" style="left:245.03px;top:609px;width:1px;height:1.5px;background:#555"></div><div class="a" style="left:253.12px;top:609px;width:1px;height:1.5px;background:#555"></div><div class="a" style="left:261.21px;top:609px;width:1px;height:1.5px;background:#555"></div><div class="a" style="left:269.30px;top:609px;width:1px;height:1.5px;background:#555"></div><div class="a" style="left:277.39px;top:609px;width:1px;height:1.5px;background:#555"></div><div class="a" style="left:285.48px;top:609px;width:1px;height:1.5px;background:#555"></div><div class="a" style="left:293.57px;top:609px;width:1px;height:1.5px;background:#555"></div><div class="a" style="left:301.66px;top:609px;width:1px;height:1.5px;background:#555"></div><div class="a" style="left:309.75px;top:609px;width:1px;height:1.5px;background:#555"></div><div class="a" style="left:315px;top:615px;width:2px;height:4px;background:#2a2a2a;"></div><div class="a" style="left:191px;top:613.5px;width:4.5px;height:4.5px;border-radius:3px;background:#243c58"></div><div class="a" style="left:189px;top:622px;width:129px;height:12px;background:#5d5d5d;"></div><div class="a" style="left:196.49px;top:622px;width:1px;height:1.5px;background:#555"></div><div class="a" style="left:204.58px;top:622px;width:1px;height:1.5px;background:#555"></div><div class="a" style="left:212.67px;top:622px;width:1px;height:1.5px;background:#555"></div><div class="a" style="left:220.76px;top:622px;width:1px;height:1.5px;background:#555"></div><div class="a" style="left:228.85px;top:622px;width:1px;height:1.5px;background:#555"></div><div class="a" style="left:236.94px;top:622px;width:1px;height:1.5px;background:#555"></div><div class="a" style="left:245.03px;top:622px;width:1px;height:1.5px;background:#555"></div><div class="a" style="left:253.12px;top:622px;width:1px;height:1.5px;background:#555"></div><div class="a" style="left:261.21px;top:622px;width:1px;height:1.5px;background:#555"></div><div class="a" style="left:269.30px;top:622px;width:1px;height:1.5px;background:#555"></div><div class="a" style="left:277.39px;top:622px;width:1px;height:1.5px;background:#555"></div><div class="a" style="left:285.48px;top:622px;width:1px;height:1.5px;background:#555"></div><div class="a" style="left:293.57px;top:622px;width:1px;height:1.5px;background:#555"></div><div class="a" style="left:301.66px;top:622px;width:1px;height:1.5px;background:#555"></div><div class="a" style="left:309.75px;top:622px;width:1px;height:1.5px;background:#555"></div><div class="a" style="left:315px;top:628px;width:2px;height:4px;background:#2a2a2a;"></div><div class="a" style="left:191px;top:626.5px;width:4.5px;height:4.5px;border-radius:3px;background:#243c58"></div><div class="a" style="left:189px;top:635px;width:129px;height:12px;background:#a7a7a7;"></div><div class="a" style="left:196.49px;top:635px;width:1px;height:1.5px;background:#555"></div><div class="a" style="left:204.58px;top:635px;width:1px;height:1.5px;background:#555"></div><div class="a" style="left:212.67px;top:635px;width:1px;height:1.5px;background:#555"></div><div class="a" style="left:220.76px;top:635px;width:1px;height:1.5px;background:#555"></div><div class="a" style="left:228.85px;top:635px;width:1px;height:1.5px;background:#555"></div><div class="a" style="left:236.94px;top:635px;width:1px;height:1.5px;background:#555"></div><div class="a" style="left:245.03px;top:635px;width:1px;height:1.5px;background:#555"></div><div class="a" style="left:253.12px;top:635px;width:1px;height:1.5px;background:#555"></div><div class="a" style="left:261.21px;top:635px;width:1px;height:1.5px;background:#555"></div><div class="a" style="left:269.30px;top:635px;width:1px;height:1.5px;background:#555"></div><div class="a" style="left:277.39px;top:635px;width:1px;height:1.5px;background:#555"></div><div class="a" style="left:285.48px;top:635px;width:1px;height:1.5px;background:#555"></div><div class="a" style="left:293.57px;top:635px;width:1px;height:1.5px;background:#555"></div><div class="a" style="left:301.66px;top:635px;width:1px;height:1.5px;background:#555"></div><div class="a" style="left:309.75px;top:635px;width:1px;height:1.5px;background:#555"></div><div class="a" style="left:315px;top:641px;width:2px;height:4px;background:#2a2a2a;"></div><div class="a" style="left:191px;top:639.5px;width:4.5px;height:4.5px;border-radius:3px;background:#243c58"></div><div class="a" style="left:189px;top:648px;width:129px;height:12px;background:#a7a7a7;"></div><div class="a" style="left:196.49px;top:648px;width:1px;height:1.5px;background:#555"></div><div class="a" style="left:204.58px;top:648px;width:1px;height:1.5px;background:#555"></div><div class="a" style="left:212.67px;top:648px;width:1px;height:1.5px;background:#555"></div><div class="a" style="left:220.76px;top:648px;width:1px;height:1.5px;background:#555"></div><div class="a" style="left:228.85px;top:648px;width:1px;height:1.5px;background:#555"></div><div class="a" style="left:236.94px;top:648px;width:1px;height:1.5px;background:#555"></div><div class="a" style="left:245.03px;top:648px;width:1px;height:1.5px;background:#555"></div><div class="a" style="left:253.12px;top:648px;width:1px;height:1.5px;background:#555"></div><div class="a" style="left:261.21px;top:648px;width:1px;height:1.5px;background:#555"></div><div class="a" style="left:269.30px;top:648px;width:1px;height:1.5px;background:#555"></div><div class="a" style="left:277.39px;top:648px;width:1px;height:1.5px;background:#555"></div><div class="a" style="left:285.48px;top:648px;width:1px;height:1.5px;background:#555"></div><div class="a" style="left:293.57px;top:648px;width:1px;height:1.5px;background:#555"></div><div class="a" style="left:301.66px;top:648px;width:1px;height:1.5px;background:#555"></div><div class="a" style="left:309.75px;top:648px;width:1px;height:1.5px;background:#555"></div><div class="a" style="left:315px;top:654px;width:2px;height:4px;background:#2a2a2a;"></div><div class="a" style="left:191px;top:652.5px;width:4.5px;height:4.5px;border-radius:3px;background:#243c58"></div><div class="a" style="left:189px;top:661px;width:129px;height:12px;background:#a7a7a7;"></div><div class="a" style="left:196.49px;top:661px;width:1px;height:1.5px;background:#555"></div><div class="a" style="left:204.58px;top:661px;width:1px;height:1.5px;background:#555"></div><div class="a" style="left:212.67px;top:661px;width:1px;height:1.5px;background:#555"></div><div class="a" style="left:220.76px;top:661px;width:1px;height:1.5px;background:#555"></div><div class="a" style="left:228.85px;top:661px;width:1px;height:1.5px;background:#555"></div><div class="a" style="left:236.94px;top:661px;width:1px;height:1.5px;background:#555"></div><div class="a" style="left:245.03px;top:661px;width:1px;height:1.5px;background:#555"></div><div class="a" style="left:253.12px;top:661px;width:1px;height:1.5px;background:#555"></div><div class="a" style="left:261.21px;top:661px;width:1px;height:1.5px;background:#555"></div><div class="a" style="left:269.30px;top:661px;width:1px;height:1.5px;background:#555"></div><div class="a" style="left:277.39px;top:661px;width:1px;height:1.5px;background:#555"></div><div class="a" style="left:285.48px;top:661px;width:1px;height:1.5px;background:#555"></div><div class="a" style="left:293.57px;top:661px;width:1px;height:1.5px;background:#555"></div><div class="a" style="left:301.66px;top:661px;width:1px;height:1.5px;background:#555"></div><div class="a" style="left:309.75px;top:661px;width:1px;height:1.5px;background:#555"></div><div class="a" style="left:315px;top:667px;width:2px;height:4px;background:#2a2a2a;"></div><div class="a" style="left:191px;top:665.5px;width:4.5px;height:4.5px;border-radius:3px;background:#243c58"></div><div class="t" style="left:190.5px;top:623.42px;font-size:6px;color:#e8e8e8;font-weight:bold;">α</div><div class="a" style="left:192.5px;top:600px;width:1.2px;height:77px;background:#4a90e2;"></div><div class="a" style="left:189px;top:587px;width:8px;height:21px;background:#3d85d6;border-radius:0 0 3.5px 3.5px"></div><div class="a" style="left:189px;top:678px;width:875px;height:5.5px;background:#555555;"></div><div class="a" style="left:189px;top:678px;width:152px;height:5.5px;background:#d6d6d6;"></div><div class="a" style="left:1064px;top:563px;width:6px;height:124px;background:#323232;"></div><svg style="left:44px;top:593px;" width="10" height="10" viewBox="0 0 10 10"><path d="M5 0.5 L9.5 2.8 L5 5 L0.5 2.8 Z" fill="#e6e6e6"/><path d="M0.5 5 L5 7.2 L9.5 5" fill="none" stroke="#e6e6e6" stroke-width="1.1"/><path d="M0.5 7.2 L5 9.4 L9.5 7.2" fill="none" stroke="#e6e6e6" stroke-width="1.1"/></svg><div class="a" style="left:120px;top:596px;width:3.6px;height:3.6px;border-radius:2px;background:#e8e8e8"></div><div class="a" style="left:134px;top:593px;width:6px;height:9.5px;border:1.4px solid #f0f0f0;border-radius:0.5px"></div><svg style="left:149px;top:592px;" width="10" height="11" viewBox="0 0 10 11"><path d="M0.7 5.5 Q5 0.8 9.3 5.5 Q5 10.2 0.7 5.5 Z" fill="none" stroke="#e6e6e6" stroke-width="1.1"/><circle cx="5" cy="5.5" r="1.6" fill="#e6e6e6"/><path d="M1 1 L9 10" stroke="#e6e6e6" stroke-width="1.1"/></svg><svg style="left:167px;top:592px;" width="9" height="11" viewBox="0 0 9 11"><path d="M2.3 4.5 L2.3 3 Q2.3 0.9 4.5 0.9 Q6.7 0.9 6.7 3 L6.7 4.5" fill="none" stroke="#e6e6e6" stroke-width="1.2"/><rect x="0.8" y="4.5" width="7.4" height="5.5" fill="#e6e6e6"/><rect x="4" y="6.3" width="1" height="2" fill="#323232"/></svg><div class="a" style="left:38px;top:608px;width:150px;height:1px;background:#292929;"></div><div class="a" style="left:38px;top:621px;width:150px;height:1px;background:#292929;"></div><svg style="left:57px;top:611px;" width="8" height="8" viewBox="0 0 8 8"><path d="M0.5 0.5 L4.5 0.5 M0.5 0.5 L0.5 4.5 M0.8 0.8 L7.5 7.5" fill="none" stroke="#e0e0e0" stroke-width="1.2"/></svg><div class="t" style="left:72.6px;top:612.50px;font-size:7.8px;color:#d0d0d0;letter-spacing:-0.25px;">Инструкции</div><div class="a" style="left:134.6px;top:611px;width:5.5px;height:9px;background:#ef5350;"></div><div class="a" style="left:38px;top:634px;width:150px;height:1px;background:#292929;"></div><svg style="left:57px;top:624px;" width="9" height="9" viewBox="0 0 9 9"><path d="M1 0.6 L7.4 0.6 Q8.4 0.6 8.4 1.6 L8.4 7.4 Q8.4 8.4 7.4 8.4 L3.6 8.4 L0.6 5.4 L0.6 1 Z" fill="#9c9c9c" stroke="#dadada" stroke-width="1.1"/><path d="M0.8 5.3 L3.6 5.3 L3.6 8.2" fill="none" stroke="#dadada" stroke-width="1.1"/></svg><div class="t" style="left:72.6px;top:625.50px;font-size:7.8px;color:#d0d0d0;letter-spacing:-0.25px;">Действия</div><div class="a" style="left:134.6px;top:624px;width:5.5px;height:9px;background:#9b3ad0;"></div><div class="a" style="left:38px;top:635px;width:150px;height:12.5px;background:#3568a3;"></div><div class="a" style="left:38px;top:647px;width:150px;height:1px;background:#292929;"></div><svg style="left:57px;top:637px;" width="9" height="9" viewBox="0 0 9 9"><path d="M1 0.6 L7.4 0.6 Q8.4 0.6 8.4 1.6 L8.4 7.4 Q8.4 8.4 7.4 8.4 L3.6 8.4 L0.6 5.4 L0.6 1 Z" fill="#9c9c9c" stroke="#dadada" stroke-width="1.1"/><path d="M0.8 5.3 L3.6 5.3 L3.6 8.2" fill="none" stroke="#dadada" stroke-width="1.1"/></svg><div class="t" style="left:72.6px;top:638.50px;font-size:7.8px;color:#cfe3ff;letter-spacing:-0.25px;">Wolf Run</div><div class="a" style="left:134.6px;top:637px;width:5.5px;height:9px;background:#1ad8f2;"></div><div class="a" style="left:38px;top:660px;width:150px;height:1px;background:#292929;"></div><svg style="left:57px;top:650px;" width="9" height="9" viewBox="0 0 9 9"><path d="M1 0.6 L7.4 0.6 Q8.4 0.6 8.4 1.6 L8.4 7.4 Q8.4 8.4 7.4 8.4 L3.6 8.4 L0.6 5.4 L0.6 1 Z" fill="#9c9c9c" stroke="#dadada" stroke-width="1.1"/><path d="M0.8 5.3 L3.6 5.3 L3.6 8.2" fill="none" stroke="#dadada" stroke-width="1.1"/></svg><div class="t" style="left:72.6px;top:651.50px;font-size:7.8px;color:#d0d0d0;letter-spacing:-0.25px;">Графика д...</div><div class="a" style="left:134.6px;top:650px;width:5.5px;height:9px;background:#3ee84a;"></div><div class="a" style="left:38px;top:673px;width:150px;height:1px;background:#292929;"></div><svg style="left:57px;top:663px;" width="9" height="9" viewBox="0 0 9 9"><path d="M1 0.6 L7.4 0.6 Q8.4 0.6 8.4 1.6 L8.4 7.4 Q8.4 8.4 7.4 8.4 L3.6 8.4 L0.6 5.4 L0.6 1 Z" fill="#9c9c9c" stroke="#dadada" stroke-width="1.1"/><path d="M0.8 5.3 L3.6 5.3 L3.6 8.2" fill="none" stroke="#dadada" stroke-width="1.1"/></svg><div class="t" style="left:72.6px;top:664.50px;font-size:7.8px;color:#d0d0d0;letter-spacing:-0.25px;">Фон</div><div class="a" style="left:134.6px;top:663px;width:5.5px;height:9px;background:#3ee84a;"></div><div class="a" style="left:38px;top:673px;width:150px;height:1px;background:#292929;"></div><div class="a" style="left:38px;top:683px;width:1032px;height:4px;background:#2a2a2a;"></div><div class="a" style="left:38px;top:682.5px;width:150px;height:1px;background:#272727;"></div><div class="a" style="left:1070px;top:29px;width:2px;height:658px;background:#262626;"></div><div class="a" style="left:1072px;top:29px;width:208px;height:658px;background:#323232;"></div><div class="a" style="left:1276px;top:29px;width:4px;height:658px;background:#2a2a2a;"></div><div class="a" style="left:1072px;top:29px;width:204px;height:8px;background:#2e2e2e;"></div><svg style="left:1268px;top:31.5px;" width="6" height="4" viewBox="0 0 6 4"><path d="M0.5 0.3 L2.5 2 L0.5 3.7 M3.3 0.3 L5.3 2 L3.3 3.7" fill="none" stroke="#e8e8e8" stroke-width="1.1"/></svg><div class="a" style="left:1072px;top:37px;width:204px;height:1px;background:#282828;"></div><div class="a" style="left:1072px;top:38px;width:204px;height:11px;background:#2e2e2e;"></div><div class="a" style="left:1107px;top:38px;width:146px;height:11px;background:#2a2a2a;"></div><div class="t" style="left:1077px;top:40.23px;font-size:8px;color:#ffffff;letter-spacing:-0.2px;font-weight:bold;transform:scaleX(0.88);transform-origin:left center;">Активы</div><div class="t" style="left:1112px;top:40.23px;font-size:8px;color:#6e6e6e;letter-spacing:-0.2px;font-weight:bold;transform:scaleX(0.85);transform-origin:left center;">Свойства</div><div class="t" style="left:1148px;top:40.23px;font-size:8px;color:#6e6e6e;letter-spacing:-0.2px;font-weight:bold;transform:scaleX(0.85);transform-origin:left center;">Цвет</div><div class="t" style="left:1170px;top:40.23px;font-size:8px;color:#6e6e6e;letter-spacing:-0.2px;font-weight:bold;transform:scaleX(0.85);transform-origin:left center;">Выровнять</div><div class="t" style="left:1212px;top:40.23px;font-size:8px;color:#6e6e6e;letter-spacing:-0.2px;font-weight:bold;transform:scaleX(0.85);transform-origin:left center;">Библиотека</div><div class="a" style="left:1108px;top:38px;width:1px;height:11px;background:#282828;"></div><div class="a" style="left:1145px;top:38px;width:1px;height:11px;background:#282828;"></div><div class="a" style="left:1166px;top:38px;width:1px;height:11px;background:#282828;"></div><div class="a" style="left:1208px;top:38px;width:1px;height:11px;background:#282828;"></div><div class="a" style="left:1254px;top:38px;width:1px;height:11px;background:#282828;"></div><div class="a" style="left:1266px;top:40.5px;width:7.5px;height:2px;background:#9a9a9a;"></div><div class="a" style="left:1266px;top:43.5px;width:7.5px;height:2px;background:#9a9a9a;"></div><div class="a" style="left:1072px;top:49px;width:204px;height:1px;background:#282828;"></div><div class="a" style="left:1082.5px;top:61px;width:88.5px;height:21px;background:#4a4a4a;border-radius:3px"></div><div class="t" style="left:1094.3px;top:67.53px;font-size:10px;color:#ececec;letter-spacing:-0.25px;">По умолчанию</div><div class="t" style="left:1187.6px;top:67.53px;font-size:10px;color:#ececec;letter-spacing:-0.38px;">Пользовательский</div><div class="a" style="left:1083.5px;top:93.5px;width:155.5px;height:21px;background:#232323;border:1px solid #3c3c3c;border-radius:2px"></div><svg style="left:1092px;top:98px;" width="11" height="11" viewBox="0 0 11 11"><circle cx="4.5" cy="4.5" r="3.6" fill="none" stroke="#d8d8d8" stroke-width="1.2"/><path d="M7.2 7.2 L10.2 10.2" stroke="#d8d8d8" stroke-width="1.3"/></svg><div class="t" style="left:1113px;top:99.88px;font-size:9px;color:#6a6a6a;letter-spacing:-0.3px;">Поиск</div><svg style="left:1250px;top:97px;" width="12" height="13" viewBox="0 0 12 13"><circle cx="1.5" cy="2" r="1.2" fill="#cfcfcf"/><circle cx="1.5" cy="6.5" r="1.2" fill="#cfcfcf"/><circle cx="1.5" cy="11" r="1.2" fill="#cfcfcf"/><path d="M4 2 L11.5 2 M4 6.5 L11.5 6.5 M4 11 L11.5 11" stroke="#cfcfcf" stroke-width="1.5"/></svg><div class="a" style="left:1072px;top:126px;width:204px;height:1px;background:#2a2a2a;"></div><svg style="left:1084px;top:137px;" width="7" height="5" viewBox="0 0 7 5"><path d="M0.6 0.6 L3.5 3.5 L6.4 0.6" fill="none" stroke="#c8c8c8" stroke-width="1.1"/></svg><div class="t" style="left:1094.5px;top:136.08px;font-size:10.3px;color:#d8d8d8;transform:scaleX(0.87);transform-origin:left center;">Анимированный</div><div class="a" style="left:1083.5px;top:158.7px;width:155.5px;height:20.5px;background:#2b2b2b;border:1px solid #3c3c3c;border-radius:2px"></div><div class="t" style="left:1091.5px;top:164.78px;font-size:10.3px;color:#dedede;transform:scaleX(0.87);transform-origin:left center;">Персонажи</div><svg style="left:1223px;top:166.7px;" width="8" height="5" viewBox="0 0 8 5"><path d="M0.7 0.7 L3.8 3.8 L6.9 0.7" fill="none" stroke="#d8d8d8" stroke-width="1.2"/></svg><div class="a" style="left:1083.5px;top:185.8px;width:155.5px;height:20.5px;background:#2b2b2b;border:1px solid #3c3c3c;border-radius:2px"></div><div class="t" style="left:1091.5px;top:191.88px;font-size:10.3px;color:#dedede;transform:scaleX(0.87);transform-origin:left center;">Объекты</div><svg style="left:1223px;top:193.8px;" width="8" height="5" viewBox="0 0 8 5"><path d="M0.7 0.7 L3.8 3.8 L6.9 0.7" fill="none" stroke="#d8d8d8" stroke-width="1.2"/></svg><svg style="left:1249px;top:162px;" width="12" height="13" viewBox="0 0 12 13"><path d="M0.5 0.5 L11.5 0.5 L7.3 5.5 L7.3 12 L4.7 10.5 L4.7 5.5 Z" fill="#e0e0e0"/></svg><div class="a" style="left:1086.5px;top:218.7px;width:86.5px;height:48.3px;background:#d4d4d4;"></div><div class="a" style="left:1175.8px;top:218.7px;width:86.5px;height:48.3px;background:#d4d4d4;"></div><div class="a" style="left:1086.5px;top:270px;width:86.5px;height:48.3px;background:#d4d4d4;"></div><div class="a" style="left:1175.8px;top:270px;width:86.5px;height:48.3px;background:#d4d4d4;"></div><div class="a" style="left:1086.5px;top:321.4px;width:86.5px;height:48.3px;background:#d4d4d4;"></div><div class="a" style="left:1175.8px;top:321.4px;width:86.5px;height:48.3px;background:#d4d4d4;"></div><div class="a" style="left:1086.5px;top:372.6px;width:86.5px;height:48.3px;background:#d4d4d4;"></div><div class="a" style="left:1175.8px;top:372.6px;width:86.5px;height:48.3px;background:#d4d4d4;"></div><div class="a" style="left:1270px;top:218px;width:5.5px;height:203px;background:#555555;"></div><div class="a" style="left:1270px;top:218px;width:5.5px;height:25px;background:#d8d8d8;"></div><svg style="left:0;top:0" width="1280" height="687" viewBox="0 0 1280 687"><path d="M1105.3 229 Q1109 226 1114 231 L1124 244 L1122 248 Q1112 243 1105.3 229 Z" fill="#f03a14"/><path d="M1109 239 Q1116 242 1123 245 L1125 250 L1117 251 Q1111 246 1109 239 Z" fill="#f8cc10"/><path d="M1123 249 Q1135 240 1139 228 L1143 219.5 L1145 226 L1148 225 L1149 231 L1153 232 L1151 238 L1154 238 Q1148 246 1133 252 Z" fill="#1f6fd8"/><path d="M1129 250 Q1138 245 1143 238 L1144 245 Q1138 249 1131 252 Z" fill="#3f9af0"/><path d="M1115 250 Q1125 249 1134 253 L1146 260 L1155 267 L1152 267 L1138 259 Q1125 256 1116 254 Z" fill="#1d66cc"/><path d="M1134 253 L1146 259 L1155 267 L1144 261 Z" fill="#e8c020"/><path d="M1148 263 L1155 267.5 L1150 266 Z" fill="#e04020"/><path d="M1110 250 Q1113 248 1116 250 L1115 254 Q1112 255 1110 253 Z" fill="#2a2a2a"/><path d="M1209 229 Q1210 225 1216 224 L1235 225 Q1236 233 1233 240 L1230 242 L1212 242 Q1208 238 1209 229 Z" fill="#e8e8e8" stroke="#a8a8a8" stroke-width="0.7"/><path d="M1216.5 228 L1218 221 L1221 225 L1223 219.5 L1226 224 L1229 220 L1230 225 L1234 223 L1233 229 Z" fill="#222"/><path d="M1231 231 L1235 231 L1234 235 Z" fill="#222"/><rect x="1209" y="236" width="11" height="4" fill="#3a7a6a"/><path d="M1211 241 L1230 241 L1231 256 L1210 256 Z" fill="#e6e6e6" stroke="#a8a8a8" stroke-width="0.7"/><path d="M1219 243 L1224.5 243 L1224 247 L1219 247 Z" fill="#e8c070"/><path d="M1222 249 L1229.6 249 L1229 256 L1223 256 Z" fill="#2e6a5c"/><path d="M1227 241 L1233 242 L1232 245 L1227 245 Z" fill="#2e6a5c"/><path d="M1210 256 L1203 264 L1204 266 L1213 266 L1216 258 Z" fill="#e6e6e6" stroke="#a8a8a8" stroke-width="0.7"/><path d="M1220 257 L1224 265 L1232 265 L1230 257 Z" fill="#e6e6e6" stroke="#a8a8a8" stroke-width="0.7"/><rect x="1087.5" y="270.5" width="85" height="34" fill="#cdcdcd"/><path d="M1092 291 Q1100 296 1110 288 L1112 297 Q1102 301 1093 299 Z" fill="#6e4a30"/><path d="M1089 286.5 Q1094 290 1096 292 L1095 297 Q1090 296 1089 292 Z" fill="#f6f6f6"/><path d="M1109 286 Q1115 281 1131 279 Q1142 276 1147 277 Q1152 281 1152 290 L1148 304 L1141 304 L1140 298 L1122 298 L1120 304 L1110 304 Q1108 295 1109 286 Z" fill="#6d4a30"/><path d="M1131 279 Q1142 276 1147 277 L1150 284 L1140 290 Q1134 286 1131 279 Z" fill="#5d3e28"/><path d="M1145 287 Q1152 282 1160 283 L1166 290 L1171 295 L1171 298 L1163 302 L1150 303 Q1144 296 1145 287 Z" fill="#f2f2f2"/><path d="M1154 280 L1157 284 L1160 279 L1164.6 280 L1163 286 L1155 286 Z" fill="#e8608a"/><circle cx="1170.3" cy="296" r="1.2" fill="#111"/></svg><div class="a" style="left:1087px;top:304.7px;width:85.5px;height:13px;background:#ebebeb"></div><div class="a" style="left:1086.5px;top:269.5px;width:87px;height:49.5px;border:2px solid #3c78c8"></div><div class="t" style="left:1093.4px;top:308.48px;font-size:9px;color:#333333;letter-spacing:-0.3px;">Wolf Run</div><svg style="left:0;top:0" width="1280" height="687" viewBox="0 0 1280 687"><clipPath id="c4"><rect x="1175.8" y="270" width="86.5" height="48.3"/></clipPath><g clip-path="url(#c4)"><ellipse cx="1203" cy="295" rx="24.5" ry="25" fill="#f29aa8"/><ellipse cx="1201" cy="299" rx="19" ry="19" fill="#f5aab6"/><ellipse cx="1199" cy="303" rx="14" ry="14" fill="#f29aa8"/><ellipse cx="1197" cy="307" rx="9" ry="9" fill="#f7b4c0"/><path d="M1177 318.3 Q1186 306 1204 300 Q1220 296 1240 300 Q1245 308 1243.4 318.3 Z" fill="#fbe0a0"/><path d="M1184 312 Q1194 303 1205 301" fill="none" stroke="#222" stroke-width="1"/></g><circle cx="1213.2" cy="297" r="7" fill="#fbfbfb" stroke="#bbb" stroke-width="0.6"/><path d="M1210.5 294.3 L1215.9 299.7 M1215.9 294.3 L1210.5 299.7" stroke="#111" stroke-width="2"/><circle cx="1250.7" cy="300.3" r="6.8" fill="#fbfbfb" stroke="#bbb" stroke-width="0.6"/><path d="M1248 297.6 L1253.4 303 M1253.4 297.6 L1248 303" stroke="#111" stroke-width="2"/><path d="M1119.5 334 Q1122 322 1132 321.5 Q1141 322 1141.3 332 Z" fill="#d42a24"/><circle cx="1117.3" cy="333.8" r="3" fill="#f6f6f6" stroke="#999" stroke-width="0.4"/><rect x="1121.7" y="331" width="20.3" height="3.6" rx="1.5" fill="#f4f4f4"/><path d="M1119.5 342 L1131 342 L1142.8 344 L1142.8 357.8 L1121 357.8 Q1118 350 1119.5 342 Z" fill="#d42a24"/><rect x="1123.8" y="334.6" width="17.5" height="6.4" rx="2" fill="#f2d0b0"/><path d="M1124.6 339 Q1134 343 1145 339 Q1147 349 1138 351.3 Q1127 352 1124.6 339 Z" fill="#fafafa" stroke="#aaa" stroke-width="0.4"/><path d="M1122.4 356.4 L1130 356.4 L1131 364 L1124 364 Z M1134 356.4 L1142.8 356.4 L1142 364 L1135 364 Z" fill="#d42a24"/><path d="M1123 361 L1131 361 L1131 363 L1123 363 Z M1134.5 360.5 L1142 360.5 L1142 362.5 L1134.5 362.5 Z" fill="#f4f4f4"/><path d="M1120 364 L1131 364 L1132 367.3 L1122 367.3 Z M1134 364 L1143 364 L1143 367 L1134 367 Z" fill="#7a2222"/><path d="M1244 335.3 Q1252 327 1261.6 328" fill="none" stroke="#111" stroke-width="1.4"/><path d="M1218.7 338 Q1232 333 1244 336 Q1248 344 1246 352 L1256 348 L1257 355 L1243 357 Q1238 362 1225 362 Z" fill="#f7c15a" stroke="#111" stroke-width="2"/><path d="M1224.5 356 L1236 358 L1239 366 L1226 366 Z" fill="#f7c15a" stroke="#111" stroke-width="1.8"/><path d="M1196 345 Q1196 333 1208 333 Q1222 335 1224 350 Q1224 363 1212 363.7 Q1198 362 1196 345 Z" fill="#f7c15a" stroke="#111" stroke-width="2.2"/><path d="M1179 352 Q1180 336 1192 333 Q1198 334 1197 342 Q1194 356 1186 358 Q1179 358 1179 352 Z" fill="#f7c15a" stroke="#111" stroke-width="2.2"/><path d="M1205 334 Q1208 326 1216 326 Q1225 328 1224 336 Q1218 340 1210 338 Z" fill="#f7c15a" stroke="#111" stroke-width="2"/><ellipse cx="1212" cy="348" rx="6" ry="7" fill="#111"/><circle cx="1201.6" cy="340.7" r="1.3" fill="#111"/><circle cx="1205.6" cy="338.2" r="1.3" fill="#111"/><path d="M1116.6 412 Q1108 410 1102 414" fill="none" stroke="#111" stroke-width="1.4"/><path d="M1118 418 Q1116 405 1124 398.7 L1140 399 Q1146 410 1145.7 418.3 Z" fill="#f7c15a" stroke="#111" stroke-width="2"/><path d="M1129 385 Q1130 374.6 1142 374.6 Q1155 376 1155 390 Q1154 401.6 1140 401.6 Q1128 399 1129 385 Z" fill="#f7c15a" stroke="#111" stroke-width="2.2"/><path d="M1122 390 Q1121 379 1128 377.5 Q1133 379 1132.6 390 Q1131 398.7 1126 398.7 Q1121 397 1122 390 Z" fill="#f7c15a" stroke="#111" stroke-width="2.2"/><path d="M1142.8 378 Q1148 373 1154 376 Q1157 383 1153 387 L1146 384 Z" fill="#f7c15a" stroke="#111" stroke-width="1.8"/><ellipse cx="1145" cy="387" rx="6" ry="5.8" fill="#111"/><circle cx="1136.2" cy="381.2" r="1.2" fill="#111"/><circle cx="1139.9" cy="379" r="1.2" fill="#111"/><path d="M1127 408 L1131 404 L1129 414 L1133 414" fill="none" stroke="#111" stroke-width="1.2"/><path d="M1208.5 381.2 Q1209 372.5 1216 372.5 Q1223.8 373 1223.8 381.2 Z" fill="#b6cf4a"/><path d="M1209 381 L1216.5 393 L1223.5 381 M1212.5 381 L1216.5 393 L1220 381" fill="none" stroke="#fafafa" stroke-width="0.9"/><ellipse cx="1218" cy="405" rx="13.9" ry="12.8" fill="#f6a3a0"/><ellipse cx="1212.5" cy="406" rx="4.8" ry="3" fill="#f8bcb8" stroke="#e08888" stroke-width="0.5"/><circle cx="1211" cy="406" r="0.7" fill="#7a3030"/><circle cx="1214" cy="406" r="0.7" fill="#7a3030"/><ellipse cx="1212.5" cy="400" rx="2" ry="1.3" fill="#fff"/></svg><div class="t" style="left:1161px;top:435.58px;font-size:10.3px;color:#d8d8d8;transform:scaleX(0.87);transform-origin:left center;">Показать следующее</div><svg style="left:1255px;top:436px;" width="6" height="9" viewBox="0 0 6 9"><path d="M3 0.5 L3 7.5 M0.8 5 L3 7.8 L5.2 5" fill="none" stroke="#e0e0e0" stroke-width="1.1"/></svg><div class="a" style="left:1072px;top:460.5px;width:204px;height:1px;background:#2a2a2a;"></div><svg style="left:1084px;top:471px;" width="5" height="8" viewBox="0 0 5 8"><path d="M0.7 0.7 L3.7 3.7 L0.7 6.7" fill="none" stroke="#c8c8c8" stroke-width="1.1"/></svg><div class="t" style="left:1095px;top:470.58px;font-size:10.3px;color:#d8d8d8;transform:scaleX(0.87);transform-origin:left center;">Статический</div><div class="a" style="left:1072px;top:488.5px;width:204px;height:1px;background:#2a2a2a;"></div><svg style="left:1084px;top:499px;" width="5" height="8" viewBox="0 0 5 8"><path d="M0.7 0.7 L3.7 3.7 L0.7 6.7" fill="none" stroke="#c8c8c8" stroke-width="1.1"/></svg><div class="t" style="left:1095px;top:498.58px;font-size:10.3px;color:#d8d8d8;transform:scaleX(0.87);transform-origin:left center;">Звуковые клипы</div><div class="a" style="left:1072px;top:516px;width:204px;height:1px;background:#2a2a2a;"></div><div class="a" style="left:1082.5px;top:530px;width:184px;height:54px;border:1px solid #4c4c4c;border-radius:3px"></div><div class="t" style="left:1083.5px;top:554.05px;font-size:8.8px;color:#7c7c7c;letter-spacing:-0.35px;font-style:italic;">Не знаете, как это работает?</div><div class="t" style="left:1207px;top:554.05px;font-size:8.8px;color:#5596e6;letter-spacing:-0.35px;">Начало работы</div><div class="a" style="left:1072px;top:661.5px;width:204px;height:1px;background:#2a2a2a;"></div><svg style="left:1088px;top:667px;" width="13" height="13" viewBox="0 0 13 13"><path d="M3 8.5 Q0.5 8.5 0.5 6 Q0.5 3.8 2.8 3.8 Q3.5 0.8 6.5 0.8 Q9.8 0.8 10 4 Q12.5 4.2 12.5 6.3 Q12.5 8.5 10 8.5 Z" fill="#5a5a5a"/><path d="M6.5 5 L6.5 12.5 M4.5 7 L6.5 5 L8.5 7" fill="none" stroke="#5a5a5a" stroke-width="1.2"/></svg><svg style="left:1250px;top:667px;" width="11" height="13" viewBox="0 0 11 13"><path d="M0.5 2.5 L10.5 2.5 M3.5 2.5 L4 0.8 L7 0.8 L7.5 2.5" fill="none" stroke="#e6e6e6" stroke-width="1.1"/><path d="M1.6 3.5 L2.3 12.2 L8.7 12.2 L9.4 3.5" fill="none" stroke="#e6e6e6" stroke-width="1.2"/><path d="M4 5 L4 10.5 M5.5 5 L5.5 10.5 M7 5 L7 10.5" stroke="#e6e6e6" stroke-width="0.8"/></svg><div class="a" style="left:477px;top:143px;width:270px;height:560px;background:#f0f0f0;box-shadow:0 0 0 1px rgba(0,0,0,.22), 1px 1px 2px rgba(0,0,0,.35)"></div><div class="t" style="left:501px;top:148.40px;font-size:9.3px;color:#000;-webkit-text-stroke:0.15px #000;transform:scaleX(0.86);transform-origin:left center;">Создать классическую анимацию движения</div><div class="t" style="left:501px;top:163.06px;font-size:9.3px;color:#000;-webkit-text-stroke:0.15px #000;transform:scaleX(0.86);transform-origin:left center;">Создать анимацию движения</div><div class="t" style="left:501px;top:177.73px;font-size:9.3px;color:#6d6d6d;-webkit-text-stroke:0.15px #6d6d6d;transform:scaleX(0.86);transform-origin:left center;">Создать анимацию формы</div><div class="a" style="left:498px;top:191.97px;width:246px;height:1px;background:#d7d7d7;"></div><div class="t" style="left:501px;top:197.62px;font-size:9.3px;color:#000;-webkit-text-stroke:0.15px #000;transform:scaleX(0.86);transform-origin:left center;">Вырезать</div><div class="t" style="right:547px;top:197.62px;font-size:9.3px;color:#000;-webkit-text-stroke:0.15px #000;transform:scaleX(0.9);transform-origin:right center;">Ctrl+X</div><div class="t" style="left:501px;top:212.29px;font-size:9.3px;color:#000;-webkit-text-stroke:0.15px #000;transform:scaleX(0.86);transform-origin:left center;">Копировать</div><div class="t" style="right:547px;top:212.29px;font-size:9.3px;color:#000;-webkit-text-stroke:0.15px #000;transform:scaleX(0.9);transform-origin:right center;">Ctrl+C</div><div class="t" style="left:501px;top:226.95px;font-size:9.3px;color:#000;-webkit-text-stroke:0.15px #000;transform:scaleX(0.86);transform-origin:left center;">Вставить в центр</div><div class="t" style="right:547px;top:226.95px;font-size:9.3px;color:#000;-webkit-text-stroke:0.15px #000;transform:scaleX(0.9);transform-origin:right center;">Ctrl+V</div><div class="a" style="left:498px;top:241.19px;width:246px;height:1px;background:#d7d7d7;"></div><div class="t" style="left:501px;top:246.84px;font-size:9.3px;color:#6d6d6d;-webkit-text-stroke:0.15px #6d6d6d;transform:scaleX(0.86);transform-origin:left center;">Копировать движение</div><div class="t" style="left:501px;top:261.51px;font-size:9.3px;color:#6d6d6d;-webkit-text-stroke:0.15px #6d6d6d;transform:scaleX(0.86);transform-origin:left center;">Вставить движение</div><div class="t" style="left:501px;top:276.17px;font-size:9.3px;color:#6d6d6d;-webkit-text-stroke:0.15px #6d6d6d;transform:scaleX(0.86);transform-origin:left center;">Вставить специальное движение...</div><div class="t" style="left:501px;top:290.84px;font-size:9.3px;color:#6d6d6d;-webkit-text-stroke:0.15px #6d6d6d;transform:scaleX(0.86);transform-origin:left center;">Сохранить как набор настроек движения...</div><div class="a" style="left:498px;top:305.08px;width:246px;height:1px;background:#d7d7d7;"></div><div class="t" style="left:501px;top:310.73px;font-size:9.3px;color:#000;-webkit-text-stroke:0.15px #000;transform:scaleX(0.86);transform-origin:left center;">Выделить все</div><div class="t" style="right:547px;top:310.73px;font-size:9.3px;color:#000;-webkit-text-stroke:0.15px #000;transform:scaleX(0.9);transform-origin:right center;">Ctrl+A</div><div class="t" style="left:501px;top:325.39px;font-size:9.3px;color:#000;-webkit-text-stroke:0.15px #000;transform:scaleX(0.86);transform-origin:left center;">Отменить выделение всего</div><div class="t" style="right:547px;top:325.39px;font-size:9.3px;color:#000;-webkit-text-stroke:0.15px #000;transform:scaleX(0.9);transform-origin:right center;">Ctrl+Shift+A</div><div class="t" style="left:501px;top:340.06px;font-size:9.3px;color:#000;-webkit-text-stroke:0.15px #000;transform:scaleX(0.86);transform-origin:left center;">Инвертировать выделение</div><div class="a" style="left:498px;top:354.3px;width:246px;height:1px;background:#d7d7d7;"></div><div class="a" style="left:479px;top:357.22px;width:265px;height:14.667px;background:#91c9f7;"></div><div class="t" style="left:501px;top:359.95px;font-size:9.3px;color:#000;-webkit-text-stroke:0.15px #000;transform:scaleX(0.86);transform-origin:left center;">Преобразование</div><svg style="left:735.5px;top:361.0209999999999px;" width="5" height="7" viewBox="0 0 5 7"><path d="M1 0.8 L3.8 3.5 L1 6.2" fill="none" stroke="#444" stroke-width="1"/></svg><div class="t" style="left:501px;top:374.62px;font-size:9.3px;color:#000;-webkit-text-stroke:0.15px #000;transform:scaleX(0.86);transform-origin:left center;">Упорядочить</div><svg style="left:735.5px;top:375.6879999999999px;" width="5" height="7" viewBox="0 0 5 7"><path d="M1 0.8 L3.8 3.5 L1 6.2" fill="none" stroke="#444" stroke-width="1"/></svg><div class="t" style="left:501px;top:389.28px;font-size:9.3px;color:#000;-webkit-text-stroke:0.15px #000;transform:scaleX(0.86);transform-origin:left center;">Выровнять</div><svg style="left:735.5px;top:390.35499999999985px;" width="5" height="7" viewBox="0 0 5 7"><path d="M1 0.8 L3.8 3.5 L1 6.2" fill="none" stroke="#444" stroke-width="1"/></svg><div class="a" style="left:498px;top:403.52px;width:246px;height:1px;background:#d7d7d7;"></div><div class="t" style="left:501px;top:409.17px;font-size:9.3px;color:#000;-webkit-text-stroke:0.15px #000;transform:scaleX(0.86);transform-origin:left center;">Разделить</div><div class="t" style="right:547px;top:409.17px;font-size:9.3px;color:#000;-webkit-text-stroke:0.15px #000;transform:scaleX(0.9);transform-origin:right center;">Ctrl+B</div><div class="t" style="left:501px;top:423.84px;font-size:9.3px;color:#000;-webkit-text-stroke:0.15px #000;transform:scaleX(0.86);transform-origin:left center;">Разделить символ по слоям</div><div class="t" style="left:501px;top:438.50px;font-size:9.3px;color:#000;-webkit-text-stroke:0.15px #000;transform:scaleX(0.86);transform-origin:left center;">Распределить по слоям</div><div class="t" style="right:547px;top:438.50px;font-size:9.3px;color:#000;-webkit-text-stroke:0.15px #000;transform:scaleX(0.9);transform-origin:right center;">Ctrl+Shift+D</div><div class="t" style="left:501px;top:453.17px;font-size:9.3px;color:#000;-webkit-text-stroke:0.15px #000;transform:scaleX(0.86);transform-origin:left center;">Распределить по ключевым кадрам</div><div class="t" style="right:547px;top:453.17px;font-size:9.3px;color:#000;-webkit-text-stroke:0.15px #000;transform:scaleX(0.9);transform-origin:right center;">Ctrl+Shift+K</div><div class="a" style="left:498px;top:467.41px;width:246px;height:1px;background:#d7d7d7;"></div><div class="t" style="left:501px;top:473.06px;font-size:9.3px;color:#000;-webkit-text-stroke:0.15px #000;transform:scaleX(0.86);transform-origin:left center;">Траектория движения</div><svg style="left:735.5px;top:474.12999999999977px;" width="5" height="7" viewBox="0 0 5 7"><path d="M1 0.8 L3.8 3.5 L1 6.2" fill="none" stroke="#444" stroke-width="1"/></svg><div class="a" style="left:498px;top:487.3px;width:246px;height:1px;background:#d7d7d7;"></div><div class="t" style="left:501px;top:492.94px;font-size:9.3px;color:#000;-webkit-text-stroke:0.15px #000;transform:scaleX(0.86);transform-origin:left center;">Изменить символы</div><div class="t" style="right:547px;top:492.94px;font-size:9.3px;color:#000;-webkit-text-stroke:0.15px #000;transform:scaleX(0.9);transform-origin:right center;">Ctrl+E</div><div class="t" style="left:501px;top:507.61px;font-size:9.3px;color:#000;-webkit-text-stroke:0.15px #000;transform:scaleX(0.86);transform-origin:left center;">Редактировать на месте</div><div class="t" style="left:501px;top:522.28px;font-size:9.3px;color:#000;-webkit-text-stroke:0.15px #000;transform:scaleX(0.86);transform-origin:left center;">Редактировать в новом окне</div><div class="t" style="left:501px;top:536.95px;font-size:9.3px;color:#000;-webkit-text-stroke:0.15px #000;transform:scaleX(0.86);transform-origin:left center;">Редактировать выделение</div><div class="t" style="left:501px;top:551.61px;font-size:9.3px;color:#6d6d6d;-webkit-text-stroke:0.15px #6d6d6d;transform:scaleX(0.86);transform-origin:left center;">Редактирование скелета</div><div class="a" style="left:498px;top:565.85px;width:246px;height:1px;background:#d7d7d7;"></div><div class="t" style="left:501px;top:571.50px;font-size:9.3px;color:#000;-webkit-text-stroke:0.15px #000;transform:scaleX(0.86);transform-origin:left center;">Заменить символ...</div><div class="t" style="left:501px;top:586.17px;font-size:9.3px;color:#000;-webkit-text-stroke:0.15px #000;transform:scaleX(0.86);transform-origin:left center;">Дублировать символ...</div><div class="t" style="left:501px;top:600.83px;font-size:9.3px;color:#000;-webkit-text-stroke:0.15px #000;transform:scaleX(0.86);transform-origin:left center;">Преобразовать в символ...</div><div class="t" style="right:547px;top:600.83px;font-size:9.3px;color:#000;-webkit-text-stroke:0.15px #000;transform:scaleX(0.9);transform-origin:right center;">F8</div><div class="t" style="left:501px;top:615.50px;font-size:9.3px;color:#000;-webkit-text-stroke:0.15px #000;transform:scaleX(0.86);transform-origin:left center;">Преобразовать в растровое изображение</div><div class="t" style="left:501px;top:630.17px;font-size:9.3px;color:#000;-webkit-text-stroke:0.15px #000;transform:scaleX(0.86);transform-origin:left center;">Экспортировать последовательность PNG...</div><div class="t" style="left:501px;top:644.83px;font-size:9.3px;color:#000;-webkit-text-stroke:0.15px #000;transform:scaleX(0.86);transform-origin:left center;">Создать лист спрайта...</div><div class="t" style="left:501px;top:659.50px;font-size:9.3px;color:#000;-webkit-text-stroke:0.15px #000;transform:scaleX(0.86);transform-origin:left center;">Создать атлас текстур...</div><div class="a" style="left:498px;top:673.74px;width:246px;height:1px;background:#d7d7d7;"></div><div class="t" style="left:501px;top:679.39px;font-size:9.3px;color:#000;-webkit-text-stroke:0.15px #000;transform:scaleX(0.86);transform-origin:left center;">Отображение в библиотеке</div><div class="a" style="left:744px;top:354.5px;width:261px;height:182.33699999999988px;background:#f0f0f0;box-shadow:0 0 0 1px rgba(0,0,0,.22), 1px 1px 2px rgba(0,0,0,.35)"></div><div class="t" style="left:767px;top:359.90px;font-size:9.3px;color:#000;-webkit-text-stroke:0.15px #000;transform:scaleX(0.86);transform-origin:left center;">Свободное преобразование</div><div class="t" style="left:767px;top:374.56px;font-size:9.3px;color:#6d6d6d;-webkit-text-stroke:0.15px #6d6d6d;transform:scaleX(0.86);transform-origin:left center;">Искажение</div><div class="t" style="left:767px;top:389.23px;font-size:9.3px;color:#6d6d6d;-webkit-text-stroke:0.15px #6d6d6d;transform:scaleX(0.86);transform-origin:left center;">Огибающая</div><div class="t" style="left:767px;top:403.90px;font-size:9.3px;color:#000;-webkit-text-stroke:0.15px #000;transform:scaleX(0.86);transform-origin:left center;">Масштаб</div><div class="t" style="left:767px;top:418.57px;font-size:9.3px;color:#000;-webkit-text-stroke:0.15px #000;transform:scaleX(0.86);transform-origin:left center;">Вращение и наклон</div><div class="t" style="left:767px;top:433.23px;font-size:9.3px;color:#000;-webkit-text-stroke:0.15px #000;transform:scaleX(0.86);transform-origin:left center;">Масштаб и вращение...</div><div class="t" style="right:289px;top:433.23px;font-size:9.3px;color:#000;-webkit-text-stroke:0.15px #000;transform:scaleX(0.9);transform-origin:right center;">Ctrl+Alt+S</div><div class="a" style="left:765px;top:447.47px;width:237px;height:1px;background:#d7d7d7;"></div><div class="t" style="left:767px;top:453.12px;font-size:9.3px;color:#000;-webkit-text-stroke:0.15px #000;transform:scaleX(0.86);transform-origin:left center;">Повернуть на 90° по часовой стрелке</div><div class="t" style="right:289px;top:453.12px;font-size:9.3px;color:#000;-webkit-text-stroke:0.15px #000;transform:scaleX(0.9);transform-origin:right center;">Ctrl+Shift+9</div><div class="t" style="left:767px;top:467.79px;font-size:9.3px;color:#000;-webkit-text-stroke:0.15px #000;transform:scaleX(0.86);transform-origin:left center;">Повернуть на 90° против часовой стрелки</div><div class="t" style="right:289px;top:467.79px;font-size:9.3px;color:#000;-webkit-text-stroke:0.15px #000;transform:scaleX(0.9);transform-origin:right center;">Ctrl+Shift+7</div><div class="a" style="left:765px;top:482.03px;width:237px;height:1px;background:#d7d7d7;"></div><div class="t" style="left:767px;top:487.67px;font-size:9.3px;color:#000;-webkit-text-stroke:0.15px #000;transform:scaleX(0.86);transform-origin:left center;">Отразить сверху вниз</div><div class="t" style="left:767px;top:502.34px;font-size:9.3px;color:#000;-webkit-text-stroke:0.15px #000;transform:scaleX(0.86);transform-origin:left center;">Отразить слева направо</div><div class="a" style="left:765px;top:516.58px;width:237px;height:1px;background:#d7d7d7;"></div><div class="t" style="left:767px;top:522.23px;font-size:9.3px;color:#000;-webkit-text-stroke:0.15px #000;transform:scaleX(0.86);transform-origin:left center;">Удалить преобразование</div><div class="t" style="right:289px;top:522.23px;font-size:9.3px;color:#000;-webkit-text-stroke:0.15px #000;transform:scaleX(0.9);transform-origin:right center;">Ctrl+Shift+Z</div>
</body></html>
